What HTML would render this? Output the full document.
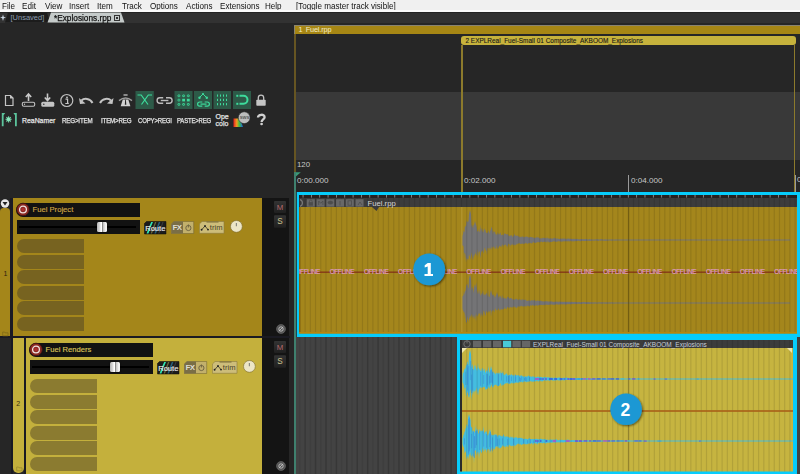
<!DOCTYPE html>
<html><head><meta charset="utf-8"><style>
*{margin:0;padding:0;box-sizing:border-box}
html,body{width:800px;height:474px;overflow:hidden;background:#262626;font-family:"Liberation Sans",sans-serif}
.a{position:absolute}
#menu{left:0;top:0;width:800px;height:12px;background:#f0f0f0}
#menu span{position:absolute;top:0.5px;font-size:8.6px;color:#111;line-height:10px;transform-origin:0 0;transform:scaleX(0.94)}
.rg{font-size:7.5px;line-height:8px;white-space:nowrap}
.tb{font-size:6.9px;color:#e4e4e4;font-weight:normal;-webkit-text-stroke:0.25px #e4e4e4;white-space:nowrap;line-height:7px}
.slot{position:absolute;height:14px;border-radius:7px 0 0 7px}
.rt{font-size:8.1px;color:#c8c8c8;white-space:nowrap;line-height:8px}
</style></head><body>
<div class="a" id="menu"><span style="left:2px">File</span><span style="left:22px">Edit</span><span style="left:45px">View</span><span style="left:69px">Insert</span><span style="left:97px">Item</span><span style="left:122px">Track</span><span style="left:150px">Options</span><span style="left:186px">Actions</span><span style="left:220px">Extensions</span><span style="left:265px">Help</span><span style="left:296px">[Toggle master track visible]</span></div>
<div class="a" style="left:0;top:10.3px;width:800px;height:1.5px;background:#fbfbfb"></div>
<div class="a" style="left:0;top:12px;width:800px;height:11px;background:#323232;border-top:1px solid #242424"></div>
<svg class="a" style="left:0;top:12px" width="140" height="11">
 <path d="M3 2.5 L3.8 5 L6 5.6 L3.8 6.3 L3 9 L2.2 6.3 L0 5.6 L2.2 5Z" fill="#c8d4e0"/>
 <polygon points="5,10.6 8,0.6 47,0.6 50,10.6" fill="#1c1c1c"/>
 <polygon points="47.5,10.6 51,0.6 121,0.6 124.5,10.6" fill="#c5cbca"/>
 <rect x="114.5" y="3.5" width="5" height="5" fill="none" stroke="#333" stroke-width="1"/>
 <rect x="116" y="5" width="2" height="2" fill="#333"/>
</svg>
<div class="a" style="left:10.5px;top:13.4px;font-size:7.5px;color:#8c9cb0;line-height:10px;letter-spacing:0px">[Unsaved]</div>
<div class="a" style="left:54px;top:12.5px;font-size:8.8px;color:#111;line-height:10px;-webkit-text-stroke:0.25px #111;transform-origin:0 0;transform:scaleX(0.94)">*Explosions.rpp</div>
<div class="a" style="left:296px;top:91.5px;width:504px;height:68.5px;background:#393939"></div>
<div class="a" style="left:294px;top:25px;width:506px;height:9px;background:#a68614;border-top:1px solid #8a8470;border-left:1px solid #8a8470"></div>
<div class="a rg" style="left:298.5px;top:26px;color:#f4ecc8;font-size:7.3px;letter-spacing:-0.15px">1<span style="margin-left:3.3px">Fuel.rpp</span></div>
<div class="a" style="left:294px;top:34px;width:2px;height:138px;background:#665522"></div>
<div class="a" style="left:461px;top:36px;width:335px;height:9px;background:#c6b23c;border-radius:3px"></div>
<div class="a rg" style="left:465.5px;top:37px;color:#151515;font-size:6.5px;-webkit-text-stroke:0.1px #151515;font-size:6.45px">2&nbsp;EXPLReal_Fuel-Small 01 Composite_AKBOOM_Explosions</div>
<div class="a" style="left:461px;top:45px;width:1.5px;height:147px;background:#8c7a2c"></div>
<div class="a" style="left:794px;top:45px;width:1px;height:147px;background:#8c7a2c"></div>
<div class="a rt" style="left:297px;top:161px;font-size:7.8px">120</div>
<svg class="a" style="left:294px;top:170px" width="12" height="10"><polygon points="0.7,2.2 6.8,2.2 0.7,7.6" fill="#3a9a78"/></svg>
<div class="a" style="left:294px;top:172px;width:2px;height:302px;background:#3f806e"></div>
<div class="a rt" style="left:297px;top:176.5px">0:00.000</div>
<div class="a rt" style="left:464px;top:176.5px">0:02.000</div>
<div class="a rt" style="left:631px;top:176.5px">0:04.000</div>
<div class="a" style="left:628px;top:175px;width:1px;height:17px;background:#9a9a9a"></div>
<div class="a" style="left:795px;top:175px;width:1px;height:17px;background:#9a9a9a"></div>
<div class="a rt" style="left:797px;top:176px">0</div>
<svg class="a" style="left:0;top:88px" width="290" height="42" viewBox="0 0 290 42">
 <path d="M5.5 7.5 H10.5 L13 10 V17.5 H5.5 Z" fill="none" stroke="#c4c4c4" stroke-width="1.2"/>
 <path d="M10 7 V10.5 H13.5 Z" fill="#c4c4c4"/>
 <path d="M28.5 13 V6.5 M25.8 9 L28.5 6 L31.2 9" stroke="#c8c8c8" stroke-width="1.6" fill="none"/>
 <rect x="22.3" y="14.3" width="12.4" height="4" rx="1.5" fill="none" stroke="#c4c4c4" stroke-width="1.1"/>
 <circle cx="24.5" cy="16.3" r="0.7" fill="#c8c8c8"/>
 <path d="M47.5 5.5 V12 M44.8 9.5 L47.5 12.5 L50.2 9.5" stroke="#c8c8c8" stroke-width="1.6" fill="none"/>
 <rect x="41.3" y="13.8" width="13" height="5" rx="1.5" fill="#c4c4c4"/>
 <circle cx="43.8" cy="16.3" r="0.8" fill="#333"/>
 <circle cx="66.8" cy="12.5" r="6" fill="none" stroke="#c0c0c0" stroke-width="1.2"/>
 <circle cx="67" cy="9.3" r="0.9" fill="#c8c8c8"/>
 <path d="M65.5 11.2 H67.6 V15.3 H68.7 M65.3 15.5 H68.8" stroke="#c8c8c8" stroke-width="1.2" fill="none"/>
 <path d="M92.5 15 C90 10 84 10 81.5 12.5" stroke="#c4c4c4" stroke-width="2" fill="none"/>
 <path d="M79 10 L80 16 L85.5 15.5 Z" fill="#c4c4c4"/>
 <path d="M100 15 C102.5 10 108.5 10 111 12.5" stroke="#c4c4c4" stroke-width="2" fill="none"/>
 <path d="M113.5 10 L112.5 16 L107 15.5 Z" fill="#c4c4c4"/>
 <path d="M123.5 6 H127.6 V8 H123.5Z" fill="#8a8a8a"/>
 <path d="M119 12.6 Q125.5 7.4 132 12.6" stroke="#9c9c9c" stroke-width="1.4" fill="none"/>
 <path d="M122.8 11.6 H128.3 L130.4 18.2 H120.7Z" fill="#d2d2d2"/>
 <path d="M125.2 11.6 H125.9 L126.3 16.8 H124.8Z" fill="#262626"/>
 <rect x="135.5" y="3" width="18.3" height="18" fill="#2d5a48"/>
 <path d="M137.5 7 H141.2 L148 16.5 M152 7 H148.3 L141.5 16.5" stroke="#3ddc9c" stroke-width="1.2" fill="none"/>
 <path d="M163.2 9.8 H159.8 A2.7 2.7 0 0 0 159.8 15.2 H163.2 M166 9.8 H169.4 A2.7 2.7 0 0 1 169.4 15.2 H166" stroke="#bcbcbc" stroke-width="1.4" fill="none"/>
 <rect x="160.8" y="11.8" width="7.6" height="1.4" fill="#bcbcbc"/>
 <rect x="174.5" y="3" width="18" height="18" fill="#2d5a48"/>
 <g fill="none" stroke="#3ddc9c" stroke-width="0.9"><rect x="177.95" y="6.95" width="1.9" height="1.7" rx=".4"/><rect x="182.64999999999998" y="6.95" width="1.9" height="1.7" rx=".4"/><rect x="187.35" y="6.95" width="1.9" height="1.7" rx=".4"/><rect x="177.95" y="11.25" width="1.9" height="1.7" rx=".4"/><rect x="177.95" y="15.549999999999999" width="1.9" height="1.7" rx=".4"/><rect x="182.64999999999998" y="15.549999999999999" width="1.9" height="1.7" rx=".4"/><rect x="187.35" y="15.549999999999999" width="1.9" height="1.7" rx=".4"/></g><g fill="#3ddc9c"><rect x="182.2" y="10.8" width="2.8" height="2.6"/><rect x="186.9" y="10.8" width="2.8" height="2.6"/></g>
 <rect x="194" y="3" width="18" height="18" fill="#2d5a48"/>
 <path d="M199.5 9.5 L203 6 L206.5 9.5" stroke="#3ddc9c" stroke-width="1" fill="none"/>
 <circle cx="199.5" cy="9.8" r="1.2" fill="#3ddc9c"/><circle cx="203" cy="6" r="1.1" fill="#3ddc9c"/><circle cx="206.8" cy="9.8" r="1.2" fill="#3ddc9c"/>
 <path d="M202.3 14 H199.7 A2.1 2.1 0 0 0 199.7 18.2 H202.3 M204.7 14 H207.3 A2.1 2.1 0 0 1 207.3 18.2 H204.7" stroke="#3ddc9c" stroke-width="1.2" fill="none"/>
 <rect x="200.5" y="15.5" width="6" height="1.2" fill="#3ddc9c"/>
 <rect x="213.5" y="3" width="17.5" height="18" fill="#2d5a48"/>
 <g fill="#3ddc9c">
  <rect x="217" y="6.5" width="1" height="2.2"/><rect x="220" y="6.5" width="1" height="2.2"/><rect x="223" y="6.5" width="1" height="2.2"/><rect x="226" y="6.5" width="1" height="2.2"/>
  <rect x="217" y="10.8" width="1" height="2.2"/><rect x="220" y="10.8" width="1" height="2.2"/><rect x="223" y="10.8" width="1" height="2.2"/><rect x="226" y="10.8" width="1" height="2.2"/>
  <rect x="217" y="15.1" width="1" height="2.2"/><rect x="220" y="15.1" width="1" height="2.2"/><rect x="223" y="15.1" width="1" height="2.2"/><rect x="226" y="15.1" width="1" height="2.2"/>
 </g>
 <rect x="233" y="3" width="18" height="18" fill="#2d5a48"/>
 <path d="M239.5 7.8 H243.5 A4 4 0 0 1 243.5 15.8 H239.5" stroke="#3ddc9c" stroke-width="2" fill="none"/>
 <rect x="236.3" y="6.8" width="2" height="2" fill="#3ddc9c"/><rect x="236.3" y="14.8" width="2" height="2" fill="#3ddc9c"/>
 <path d="M258.3 12 V9.8 A2.7 2.7 0 0 1 263.7 9.8 V12" stroke="#c4c4c4" stroke-width="1.3" fill="none"/>
 <rect x="256.3" y="11.8" width="9.4" height="6" rx="0.8" fill="#c4c4c4"/>
 <path d="M1.8 25 H5.2 L3.6 27.2 V38.2 H1.8Z M16.8 25 H13.4 L15 27.2 V38.2 H16.8Z" fill="#5cc49c"/>
 <g stroke="#72d8ac" stroke-width="1.1"><path d="M8.6 28.2 V34.4 M5.5 31.3 H11.7 M6.4 29.1 L10.8 33.5 M10.8 29.1 L6.4 33.5"/></g>
 <circle cx="8.6" cy="31.3" r="1.8" fill="#8ae6bc"/>
 <defs><linearGradient id="rb" x1="0" x2="1" y1="0" y2="0"><stop offset="0" stop-color="#e82020"/><stop offset=".35" stop-color="#f0a020"/><stop offset=".6" stop-color="#40c040"/><stop offset="1" stop-color="#2060e0"/></linearGradient></defs>
 <path d="M233.5 30.5 H240 L243 39 H233.5Z" fill="url(#rb)"/>
 <circle cx="244.2" cy="29.7" r="5.9" fill="#bdbdbd" stroke="#2a2a2a" stroke-width=".6"/>
 <text x="244.5" y="31.2" font-size="4.2" text-anchor="middle" fill="#555" font-family="Liberation Sans" font-weight="bold">SWS</text>
 <path d="M258 29.6 C258 26.2 264.6 25.6 264.6 29.2 C264.6 31.4 261.6 31.6 261.6 34" stroke="#d0d0d0" stroke-width="2.3" fill="none"/><circle cx="261.6" cy="36" r="1.35" fill="#d0d0d0"/>
</svg>

<div class="a tb" style="left:22px;top:116.5px">ReaNamer</div>
<div class="a tb" style="left:62px;top:116.5px;letter-spacing:-0.2px;transform-origin:0 0;transform:scaleX(0.9)">REG&gt;ITEM</div>
<div class="a tb" style="left:101px;top:116.5px;letter-spacing:-0.2px;transform-origin:0 0;transform:scaleX(0.9)">ITEM&gt;REG</div>
<div class="a tb" style="left:138px;top:116.5px;letter-spacing:-0.2px;transform-origin:0 0;transform:scaleX(0.875)">COPY&gt;REGI</div>
<div class="a tb" style="left:177px;top:116.5px;letter-spacing:-0.2px;transform-origin:0 0;transform:scaleX(0.865)">PASTE&gt;REG</div>
<div class="a tb" style="left:215.5px;top:113px;font-weight:normal;font-size:7px;line-height:7px">Ope<br>colo</div>
<div class="a" style="left:0;top:208.2px;width:10px;height:128.5px;background:#a4861a;border-radius:3.5px 3.5px 0 0"></div>
<div class="a" style="left:10.2px;top:198px;width:2.4px;height:140px;background:#1a1a24"></div>
<div class="a" style="left:13px;top:198px;width:250px;height:138px;background:#a4861a"></div>
<div class="a" style="left:262px;top:198px;width:27px;height:138px;background:#141414"></div>
<svg class="a" style="left:0;top:199px" width="10" height="10"><circle cx="5" cy="4.5" r="4.2" fill="#e8e8e8"/><polygon points="2.5,3 7.5,3 5,6.5" fill="#222"/></svg>
<div class="a" style="left:3.5px;top:270px;font-size:7px;color:#2a2010">1</div>
<div class="a" style="left:11px;top:338px;width:2px;height:136px;background:#1a1a22"></div>
<div class="a" style="left:13px;top:338px;width:10.5px;height:135px;background:#c4b03c;border-radius:0 0 5px 5px"></div>
<div class="a" style="left:23.5px;top:338px;width:2.5px;height:136px;background:#1a1a22"></div>
<div class="a" style="left:26px;top:338px;width:237px;height:136px;background:#c4b03c"></div>
<div class="a" style="left:262px;top:338px;width:27px;height:136px;background:#141414"></div>
<div class="a" style="left:0;top:336px;width:290px;height:2px;background:#1a1a22"></div>
<div class="a" style="left:16.3px;top:399.5px;font-size:7px;color:#3a3010">2</div>
<div class="a" style="left:16px;top:202.5px;width:123.5px;height:14px;background:#121212;border-radius:7px 0 0 7px"></div>
<svg class="a" style="left:15.5px;top:201.5px" width="15" height="15"><circle cx="7" cy="7.5" r="6.3" fill="#8a2a22" stroke="#3a1010" stroke-width=".8"/><circle cx="7" cy="7.5" r="3.4" fill="none" stroke="#f0e0e0" stroke-width="1.3"/><circle cx="7" cy="7.5" r="1.7" fill="#b03030"/></svg>
<div class="a" style="left:32.5px;top:204.5px;font-size:7.65px;-webkit-text-stroke:0.15px #cfa644;line-height:10px;color:#cfa644;white-space:nowrap">Fuel Project</div>
<div class="a" style="left:17px;top:220px;width:122.5px;height:13.5px;background:#121212"></div>
<div class="a" style="left:19px;top:226.2px;width:117px;height:1.5px;background:#000"></div>
<div class="a" style="left:97px;top:221.5px;width:9.5px;height:10px;background:linear-gradient(90deg,#b4b4b4 0,#d8d8d8 25%,#fff 42%,#fff 46%,#333 49%,#333 53%,#b8b8b8 56%,#dcdcdc 75%,#fff 92%,#ddd);border-radius:1.5px;box-shadow:0 0 1.5px #000"></div>
<svg class="a" style="left:144px;top:220.5px" width="24" height="14"><path d="M2.5 0.5 H22 V13 H0.5 V2.5Z" fill="#1c1c1c" stroke="#0a0a0a" stroke-width=".5"/><path d="M7.2 1 L9 1 L6.8 6 L5 6Z M4.6 7 L6.4 7 L4.4 12.5 L2.6 12.5Z" fill="#30e8b0"/><path d="M11 1 L12.4 1 L8 12.5 L6.6 12.5Z" fill="#6a6a3a"/><path d="M14.8 1 L16.4 1 L12 12.5 L10.4 12.5Z" fill="#28607a"/><path d="M18.4 1 L19.6 1 L15.4 12.5 L14.2 12.5Z" fill="#3a3a3a"/><text x="11.3" y="9.6" font-size="7.6" text-anchor="middle" fill="#ececec" font-family="Liberation Sans" stroke="#ececec" stroke-width=".15">Route</text></svg>
<svg class="a" style="left:171px;top:221px" width="24" height="13"><path d="M3 0.5 H22.7 V12.5 H0.3 V3Z" fill="#c2b06c" stroke="#6a5e30" stroke-width=".5"/><path d="M3 0.5 H12 V12.5 H0.3 V3Z" fill="#7a6e46"/><text x="6.3" y="9.4" font-size="7.2" text-anchor="middle" fill="#f0f0e8" font-family="Liberation Sans" stroke="#f0f0e8" stroke-width=".2">FX</text><circle cx="17.4" cy="7" r="2.6" fill="none" stroke="#6a6040" stroke-width=".9"/><path d="M17.4 3.5 V6.5" stroke="#6a6040" stroke-width=".9"/></svg>
<svg class="a" style="left:199px;top:221px" width="26" height="13"><path d="M3 0.5 H25 V12.3 H0.4 V3Z" fill="#cdbd7a" stroke="#8a7a40" stroke-width=".6"/><rect x="7.5" y="0.5" width="12" height="1" fill="#7a6c38"/><path d="M2.6 8.8 L6 5 L9 8.6" stroke="#2a2a1a" stroke-width=".75" fill="none"/><circle cx="2.6" cy="8.8" r=".95" fill="#222"/><circle cx="6" cy="5" r=".95" fill="#222"/><circle cx="9" cy="8.6" r=".95" fill="#222"/><text x="17.2" y="9.3" font-size="7.6" text-anchor="middle" fill="#4a4428" font-family="Liberation Sans">trim</text></svg>
<svg class="a" style="left:229.5px;top:220px" width="14" height="14"><circle cx="6.4" cy="6.4" r="5.9" fill="#ece6c6" stroke="#7a6a30" stroke-width=".6"/><path d="M6.4 3 V6.2" stroke="#8a8a80" stroke-width="1.2"/></svg>
<div class="slot" style="left:17.3px;top:239.00px;width:66.5px;height:14px;background:#776320"></div>
<div class="slot" style="left:17.3px;top:254.50px;width:66.5px;height:14px;background:#776320"></div>
<div class="slot" style="left:17.3px;top:270.00px;width:66.5px;height:14px;background:#776320"></div>
<div class="slot" style="left:17.3px;top:285.50px;width:66.5px;height:14px;background:#776320"></div>
<div class="slot" style="left:17.3px;top:301.00px;width:66.5px;height:14px;background:#776320"></div>
<div class="slot" style="left:17.3px;top:316.50px;width:66.5px;height:14px;background:#776320"></div>
<div class="a" style="left:29px;top:342.5px;width:123.5px;height:14px;background:#121212;border-radius:7px 0 0 7px"></div>
<svg class="a" style="left:28.5px;top:341.5px" width="15" height="15"><circle cx="7" cy="7.5" r="6.3" fill="#8a2a22" stroke="#3a1010" stroke-width=".8"/><circle cx="7" cy="7.5" r="3.4" fill="none" stroke="#f0e0e0" stroke-width="1.3"/><circle cx="7" cy="7.5" r="1.7" fill="#b03030"/></svg>
<div class="a" style="left:45.5px;top:344.5px;font-size:7.65px;-webkit-text-stroke:0.15px #dcc458;line-height:10px;color:#dcc458;white-space:nowrap">Fuel Renders</div>
<div class="a" style="left:30px;top:360px;width:122.5px;height:13.5px;background:#121212"></div>
<div class="a" style="left:32px;top:366.2px;width:117px;height:1.5px;background:#000"></div>
<div class="a" style="left:110px;top:361.5px;width:9.5px;height:10px;background:linear-gradient(90deg,#b4b4b4 0,#d8d8d8 25%,#fff 42%,#fff 46%,#333 49%,#333 53%,#b8b8b8 56%,#dcdcdc 75%,#fff 92%,#ddd);border-radius:1.5px;box-shadow:0 0 1.5px #000"></div>
<svg class="a" style="left:157px;top:360.5px" width="24" height="14"><path d="M2.5 0.5 H22 V13 H0.5 V2.5Z" fill="#1c1c1c" stroke="#0a0a0a" stroke-width=".5"/><path d="M7.2 1 L9 1 L6.8 6 L5 6Z M4.6 7 L6.4 7 L4.4 12.5 L2.6 12.5Z" fill="#30e8b0"/><path d="M11 1 L12.4 1 L8 12.5 L6.6 12.5Z" fill="#6a6a3a"/><path d="M14.8 1 L16.4 1 L12 12.5 L10.4 12.5Z" fill="#28607a"/><path d="M18.4 1 L19.6 1 L15.4 12.5 L14.2 12.5Z" fill="#3a3a3a"/><text x="11.3" y="9.6" font-size="7.6" text-anchor="middle" fill="#ececec" font-family="Liberation Sans" stroke="#ececec" stroke-width=".15">Route</text></svg>
<svg class="a" style="left:184px;top:361px" width="24" height="13"><path d="M3 0.5 H22.7 V12.5 H0.3 V3Z" fill="#c2b06c" stroke="#6a5e30" stroke-width=".5"/><path d="M3 0.5 H12 V12.5 H0.3 V3Z" fill="#7a6e46"/><text x="6.3" y="9.4" font-size="7.2" text-anchor="middle" fill="#f0f0e8" font-family="Liberation Sans" stroke="#f0f0e8" stroke-width=".2">FX</text><circle cx="17.4" cy="7" r="2.6" fill="none" stroke="#6a6040" stroke-width=".9"/><path d="M17.4 3.5 V6.5" stroke="#6a6040" stroke-width=".9"/></svg>
<svg class="a" style="left:212px;top:361px" width="26" height="13"><path d="M3 0.5 H25 V12.3 H0.4 V3Z" fill="#cdbd7a" stroke="#8a7a40" stroke-width=".6"/><rect x="7.5" y="0.5" width="12" height="1" fill="#7a6c38"/><path d="M2.6 8.8 L6 5 L9 8.6" stroke="#2a2a1a" stroke-width=".75" fill="none"/><circle cx="2.6" cy="8.8" r=".95" fill="#222"/><circle cx="6" cy="5" r=".95" fill="#222"/><circle cx="9" cy="8.6" r=".95" fill="#222"/><text x="17.2" y="9.3" font-size="7.6" text-anchor="middle" fill="#4a4428" font-family="Liberation Sans">trim</text></svg>
<svg class="a" style="left:242.5px;top:360px" width="14" height="14"><circle cx="6.4" cy="6.4" r="5.9" fill="#ece6c6" stroke="#7a6a30" stroke-width=".6"/><path d="M6.4 3 V6.2" stroke="#8a8a80" stroke-width="1.2"/></svg>
<div class="slot" style="left:30.3px;top:379.00px;width:66.5px;height:14px;background:#8b7b30"></div>
<div class="slot" style="left:30.3px;top:394.50px;width:66.5px;height:14px;background:#8b7b30"></div>
<div class="slot" style="left:30.3px;top:410.00px;width:66.5px;height:14px;background:#8b7b30"></div>
<div class="slot" style="left:30.3px;top:425.50px;width:66.5px;height:14px;background:#8b7b30"></div>
<div class="slot" style="left:30.3px;top:441.00px;width:66.5px;height:14px;background:#8b7b30"></div>
<div class="slot" style="left:30.3px;top:456.50px;width:66.5px;height:14px;background:#8b7b30"></div>
<svg class="a" style="left:274px;top:201px" width="13" height="28"><defs><linearGradient id="mb0" x1="0" y1="0" x2="0" y2="1"><stop offset="0" stop-color="#333"/><stop offset="1" stop-color="#202020"/></linearGradient></defs><rect x="0" y="0" width="12" height="12" rx="1" fill="url(#mb0)"/><text x="6" y="8.6" font-size="7.8" text-anchor="middle" fill="#b86a6e" font-family="Liberation Sans">M</text><rect x="0" y="14.3" width="12" height="12.5" rx="1" fill="url(#mb0)"/><text x="6" y="23.3" font-size="8.2" text-anchor="middle" fill="#cfc690" font-family="Liberation Sans">S</text></svg>
<svg class="a" style="left:274.5px;top:322.5px" width="12" height="12"><circle cx="6" cy="6" r="4.5" fill="#555" stroke="#777" stroke-width=".5"/><circle cx="6" cy="6" r="2.2" fill="none" stroke="#ccc" stroke-width=".8"/><path d="M3.8 8.2 L8.2 3.8" stroke="#ccc" stroke-width=".8"/></svg>
<svg class="a" style="left:274px;top:341px" width="13" height="28"><defs><linearGradient id="mb140" x1="0" y1="0" x2="0" y2="1"><stop offset="0" stop-color="#333"/><stop offset="1" stop-color="#202020"/></linearGradient></defs><rect x="0" y="0" width="12" height="12" rx="1" fill="url(#mb140)"/><text x="6" y="8.6" font-size="7.8" text-anchor="middle" fill="#b86a6e" font-family="Liberation Sans">M</text><rect x="0" y="14.3" width="12" height="12.5" rx="1" fill="url(#mb140)"/><text x="6" y="23.3" font-size="8.2" text-anchor="middle" fill="#cfc690" font-family="Liberation Sans">S</text></svg>
<svg class="a" style="left:274.5px;top:460px" width="12" height="12"><circle cx="6" cy="6" r="4.5" fill="#555" stroke="#777" stroke-width=".5"/><circle cx="6" cy="6" r="2.2" fill="none" stroke="#ccc" stroke-width=".8"/><path d="M3.8 8.2 L8.2 3.8" stroke="#ccc" stroke-width=".8"/></svg>
<svg class="a" style="left:2px;top:331px" width="7" height="6"><path d="M0.7 1 H2.5 L3 1.8 H6 V4.8 H0.7Z" fill="none" stroke="#806a18" stroke-width=".8"/></svg>
<svg class="a" style="left:15.5px;top:466px" width="7" height="6"><path d="M0.7 1 H2.5 L3 1.8 H6 V4.8 H0.7Z" fill="none" stroke="#9a8a30" stroke-width=".8"/></svg>
<svg class="a" style="left:0;top:0" width="800" height="474"><rect x="296" y="337" width="504" height="137" fill="#434343"/><rect x="299.16" y="337" width="1.50" height="137" fill="rgba(0,0,0,0.07)"/><rect x="304.38" y="337" width="1.50" height="137" fill="rgba(0,0,0,0.17)"/><rect x="309.59" y="337" width="1.50" height="137" fill="rgba(0,0,0,0.07)"/><rect x="314.80" y="337" width="1.50" height="137" fill="rgba(0,0,0,0.17)"/><rect x="320.01" y="337" width="1.50" height="137" fill="rgba(0,0,0,0.07)"/><rect x="325.22" y="337" width="1.50" height="137" fill="rgba(0,0,0,0.17)"/><rect x="330.44" y="337" width="1.50" height="137" fill="rgba(0,0,0,0.07)"/><rect x="335.65" y="337" width="1.50" height="137" fill="rgba(0,0,0,0.17)"/><rect x="340.86" y="337" width="1.50" height="137" fill="rgba(0,0,0,0.07)"/><rect x="346.07" y="337" width="1.50" height="137" fill="rgba(0,0,0,0.17)"/><rect x="351.29" y="337" width="1.50" height="137" fill="rgba(0,0,0,0.07)"/><rect x="356.50" y="337" width="1.50" height="137" fill="rgba(0,0,0,0.17)"/><rect x="361.71" y="337" width="1.50" height="137" fill="rgba(0,0,0,0.07)"/><rect x="366.93" y="337" width="1.50" height="137" fill="rgba(0,0,0,0.17)"/><rect x="372.14" y="337" width="1.50" height="137" fill="rgba(0,0,0,0.07)"/><rect x="377.35" y="337" width="1.50" height="137" fill="rgba(0,0,0,0.17)"/><rect x="382.56" y="337" width="1.50" height="137" fill="rgba(0,0,0,0.07)"/><rect x="387.77" y="337" width="1.50" height="137" fill="rgba(0,0,0,0.17)"/><rect x="392.99" y="337" width="1.50" height="137" fill="rgba(0,0,0,0.07)"/><rect x="398.20" y="337" width="1.50" height="137" fill="rgba(0,0,0,0.17)"/><rect x="403.41" y="337" width="1.50" height="137" fill="rgba(0,0,0,0.07)"/><rect x="408.62" y="337" width="1.50" height="137" fill="rgba(0,0,0,0.17)"/><rect x="413.84" y="337" width="1.50" height="137" fill="rgba(0,0,0,0.07)"/><rect x="419.05" y="337" width="1.50" height="137" fill="rgba(0,0,0,0.17)"/><rect x="424.26" y="337" width="1.50" height="137" fill="rgba(0,0,0,0.07)"/><rect x="429.48" y="337" width="1.50" height="137" fill="rgba(0,0,0,0.17)"/><rect x="434.69" y="337" width="1.50" height="137" fill="rgba(0,0,0,0.07)"/><rect x="439.90" y="337" width="1.50" height="137" fill="rgba(0,0,0,0.17)"/><rect x="445.11" y="337" width="1.50" height="137" fill="rgba(0,0,0,0.07)"/><rect x="450.32" y="337" width="1.50" height="137" fill="rgba(0,0,0,0.17)"/><rect x="455.54" y="337" width="1.50" height="137" fill="rgba(0,0,0,0.07)"/><rect x="460.75" y="337" width="1.50" height="137" fill="rgba(0,0,0,0.17)"/><rect x="465.96" y="337" width="1.50" height="137" fill="rgba(0,0,0,0.07)"/><rect x="471.18" y="337" width="1.50" height="137" fill="rgba(0,0,0,0.17)"/><rect x="476.39" y="337" width="1.50" height="137" fill="rgba(0,0,0,0.07)"/><rect x="481.60" y="337" width="1.50" height="137" fill="rgba(0,0,0,0.17)"/><rect x="486.81" y="337" width="1.50" height="137" fill="rgba(0,0,0,0.07)"/><rect x="492.02" y="337" width="1.50" height="137" fill="rgba(0,0,0,0.17)"/><rect x="497.24" y="337" width="1.50" height="137" fill="rgba(0,0,0,0.07)"/><rect x="502.45" y="337" width="1.50" height="137" fill="rgba(0,0,0,0.17)"/><rect x="507.66" y="337" width="1.50" height="137" fill="rgba(0,0,0,0.07)"/><rect x="512.88" y="337" width="1.50" height="137" fill="rgba(0,0,0,0.17)"/><rect x="518.09" y="337" width="1.50" height="137" fill="rgba(0,0,0,0.07)"/><rect x="523.30" y="337" width="1.50" height="137" fill="rgba(0,0,0,0.17)"/><rect x="528.51" y="337" width="1.50" height="137" fill="rgba(0,0,0,0.07)"/><rect x="533.73" y="337" width="1.50" height="137" fill="rgba(0,0,0,0.17)"/><rect x="538.94" y="337" width="1.50" height="137" fill="rgba(0,0,0,0.07)"/><rect x="544.15" y="337" width="1.50" height="137" fill="rgba(0,0,0,0.17)"/><rect x="549.36" y="337" width="1.50" height="137" fill="rgba(0,0,0,0.07)"/><rect x="554.58" y="337" width="1.50" height="137" fill="rgba(0,0,0,0.17)"/><rect x="559.79" y="337" width="1.50" height="137" fill="rgba(0,0,0,0.07)"/><rect x="565.00" y="337" width="1.50" height="137" fill="rgba(0,0,0,0.17)"/><rect x="570.21" y="337" width="1.50" height="137" fill="rgba(0,0,0,0.07)"/><rect x="575.42" y="337" width="1.50" height="137" fill="rgba(0,0,0,0.17)"/><rect x="580.64" y="337" width="1.50" height="137" fill="rgba(0,0,0,0.07)"/><rect x="585.85" y="337" width="1.50" height="137" fill="rgba(0,0,0,0.17)"/><rect x="591.06" y="337" width="1.50" height="137" fill="rgba(0,0,0,0.07)"/><rect x="596.28" y="337" width="1.50" height="137" fill="rgba(0,0,0,0.17)"/><rect x="601.49" y="337" width="1.50" height="137" fill="rgba(0,0,0,0.07)"/><rect x="606.70" y="337" width="1.50" height="137" fill="rgba(0,0,0,0.17)"/><rect x="611.91" y="337" width="1.50" height="137" fill="rgba(0,0,0,0.07)"/><rect x="617.12" y="337" width="1.50" height="137" fill="rgba(0,0,0,0.17)"/><rect x="622.34" y="337" width="1.50" height="137" fill="rgba(0,0,0,0.07)"/><rect x="627.55" y="337" width="1.50" height="137" fill="rgba(0,0,0,0.17)"/><rect x="632.76" y="337" width="1.50" height="137" fill="rgba(0,0,0,0.07)"/><rect x="637.98" y="337" width="1.50" height="137" fill="rgba(0,0,0,0.17)"/><rect x="643.19" y="337" width="1.50" height="137" fill="rgba(0,0,0,0.07)"/><rect x="648.40" y="337" width="1.50" height="137" fill="rgba(0,0,0,0.17)"/><rect x="653.61" y="337" width="1.50" height="137" fill="rgba(0,0,0,0.07)"/><rect x="658.83" y="337" width="1.50" height="137" fill="rgba(0,0,0,0.17)"/><rect x="664.04" y="337" width="1.50" height="137" fill="rgba(0,0,0,0.07)"/><rect x="669.25" y="337" width="1.50" height="137" fill="rgba(0,0,0,0.17)"/><rect x="674.46" y="337" width="1.50" height="137" fill="rgba(0,0,0,0.07)"/><rect x="679.67" y="337" width="1.50" height="137" fill="rgba(0,0,0,0.17)"/><rect x="684.89" y="337" width="1.50" height="137" fill="rgba(0,0,0,0.07)"/><rect x="690.10" y="337" width="1.50" height="137" fill="rgba(0,0,0,0.17)"/><rect x="695.31" y="337" width="1.50" height="137" fill="rgba(0,0,0,0.07)"/><rect x="700.53" y="337" width="1.50" height="137" fill="rgba(0,0,0,0.17)"/><rect x="705.74" y="337" width="1.50" height="137" fill="rgba(0,0,0,0.07)"/><rect x="710.95" y="337" width="1.50" height="137" fill="rgba(0,0,0,0.17)"/><rect x="716.16" y="337" width="1.50" height="137" fill="rgba(0,0,0,0.07)"/><rect x="721.38" y="337" width="1.50" height="137" fill="rgba(0,0,0,0.17)"/><rect x="726.59" y="337" width="1.50" height="137" fill="rgba(0,0,0,0.07)"/><rect x="731.80" y="337" width="1.50" height="137" fill="rgba(0,0,0,0.17)"/><rect x="737.01" y="337" width="1.50" height="137" fill="rgba(0,0,0,0.07)"/><rect x="742.23" y="337" width="1.50" height="137" fill="rgba(0,0,0,0.17)"/><rect x="747.44" y="337" width="1.50" height="137" fill="rgba(0,0,0,0.07)"/><rect x="752.65" y="337" width="1.50" height="137" fill="rgba(0,0,0,0.17)"/><rect x="757.86" y="337" width="1.50" height="137" fill="rgba(0,0,0,0.07)"/><rect x="763.08" y="337" width="1.50" height="137" fill="rgba(0,0,0,0.17)"/><rect x="768.29" y="337" width="1.50" height="137" fill="rgba(0,0,0,0.07)"/><rect x="773.50" y="337" width="1.50" height="137" fill="rgba(0,0,0,0.17)"/><rect x="778.71" y="337" width="1.50" height="137" fill="rgba(0,0,0,0.07)"/><rect x="783.92" y="337" width="1.50" height="137" fill="rgba(0,0,0,0.17)"/><rect x="789.14" y="337" width="1.50" height="137" fill="rgba(0,0,0,0.07)"/><rect x="794.35" y="337" width="1.50" height="137" fill="rgba(0,0,0,0.17)"/><rect x="799.56" y="337" width="0.44" height="137" fill="rgba(0,0,0,0.07)"/><rect x="296.8" y="192" width="503.2" height="145" fill="#06ccfc"/><rect x="299" y="195" width="498" height="12" fill="#3c3c3c"/><rect x="299" y="195" width="498" height="3" fill="#262020"/><rect x="299" y="207" width="498" height="126.5" fill="#a4861c"/><path d="M462.0 236.9 L462.5 234.7 L463.0 234.8 L463.5 230.5 L464.0 231.8 L464.5 231.9 L465.0 225.2 L465.5 226.4 L466.0 227.1 L466.5 221.5 L467.0 220.2 L467.5 222.6 L468.0 221.6 L468.5 221.4 L469.0 214.0 L469.5 212.0 L470.0 210.0 L470.5 212.0 L471.0 214.0 L471.5 227.0 L472.0 224.2 L472.5 226.5 L473.0 228.6 L473.5 224.8 L474.0 224.9 L474.5 223.0 L475.0 221.0 L475.5 223.0 L476.0 225.0 L476.5 225.6 L477.0 230.0 L477.5 231.7 L478.0 231.2 L478.5 231.0 L479.0 227.7 L479.5 232.2 L480.0 231.8 L480.5 224.4 L481.0 231.8 L481.5 228.8 L482.0 228.2 L482.5 230.7 L483.0 232.8 L483.5 231.5 L484.0 229.2 L484.5 228.6 L485.0 230.5 L485.5 229.9 L486.0 232.6 L486.5 233.2 L487.0 232.2 L487.5 233.0 L488.0 232.4 L488.5 229.7 L489.0 231.9 L489.5 233.9 L490.0 230.9 L490.5 230.5 L491.0 228.5 L491.5 226.5 L492.0 228.5 L492.5 230.5 L493.0 234.5 L493.5 231.1 L494.0 231.6 L494.5 232.5 L495.0 231.2 L495.5 234.3 L496.0 233.8 L496.5 234.4 L497.0 235.3 L497.5 233.3 L498.0 232.3 L498.5 234.9 L499.0 233.3 L499.5 234.7 L500.0 232.4 L500.5 232.7 L501.0 234.9 L501.5 234.9 L502.0 235.3 L502.5 234.3 L503.0 235.2 L503.5 235.7 L504.0 233.4 L504.5 233.8 L505.0 233.6 L505.5 233.8 L506.0 234.2 L506.5 234.6 L507.0 234.6 L507.5 234.0 L508.0 234.3 L508.5 236.0 L509.0 235.2 L509.5 236.5 L510.0 235.8 L510.5 235.5 L511.0 235.2 L511.5 235.8 L512.0 234.8 L512.5 236.9 L513.0 236.7 L513.5 235.5 L514.0 235.5 L514.5 233.5 L515.0 235.5 L515.5 235.8 L516.0 235.8 L516.5 235.6 L517.0 235.4 L517.5 236.0 L518.0 235.5 L518.5 237.2 L519.0 235.6 L519.5 237.3 L520.0 237.6 L520.5 236.4 L521.0 237.1 L521.5 237.2 L522.0 235.9 L522.5 236.3 L523.0 237.6 L523.5 236.8 L524.0 237.6 L524.5 237.0 L525.0 237.1 L525.5 236.6 L526.0 236.2 L526.5 237.0 L527.0 236.4 L527.5 236.8 L528.0 237.1 L528.5 237.5 L529.0 237.2 L529.5 237.4 L530.0 237.2 L530.5 236.8 L531.0 237.0 L531.5 237.2 L532.0 237.0 L532.5 237.5 L533.0 237.4 L533.5 237.4 L534.0 238.0 L534.5 238.3 L535.0 237.7 L535.5 237.5 L536.0 238.1 L536.5 237.3 L537.0 236.6 L537.5 237.7 L538.0 237.5 L538.5 237.3 L539.0 237.8 L539.5 238.4 L540.0 238.3 L540.5 238.5 L541.0 238.4 L541.5 238.4 L542.0 237.5 L542.5 238.5 L543.0 238.1 L543.5 237.8 L544.0 237.9 L544.5 237.7 L545.0 238.4 L545.5 238.3 L546.0 237.8 L546.5 238.7 L547.0 237.1 L547.5 238.0 L548.0 238.7 L548.5 238.2 L549.0 238.2 L549.5 238.8 L550.0 238.3 L550.5 238.5 L551.0 238.5 L551.5 238.3 L552.0 238.8 L552.5 238.9 L553.0 238.1 L553.5 238.6 L554.0 238.2 L554.5 237.6 L555.0 238.4 L555.5 238.3 L556.0 238.8 L556.5 238.4 L557.0 238.5 L557.5 238.4 L558.0 238.4 L558.5 238.7 L559.0 239.0 L559.5 238.9 L560.0 238.7 L560.5 238.4 L561.0 238.8 L561.5 238.5 L562.0 239.0 L562.5 238.6 L563.0 238.5 L563.5 238.5 L564.0 238.7 L564.5 238.4 L565.0 238.8 L565.5 238.8 L566.0 238.6 L566.5 239.2 L567.0 239.0 L567.5 238.6 L568.0 238.6 L568.5 238.6 L569.0 238.8 L569.5 238.7 L570.0 238.7 L570.5 238.8 L571.0 238.7 L571.5 238.9 L572.0 238.8 L572.5 239.1 L573.0 239.0 L573.5 238.7 L574.0 239.1 L574.5 238.8 L575.0 239.1 L575.5 239.1 L576.0 238.8 L576.5 239.2 L577.0 238.8 L577.5 239.0 L578.0 239.0 L578.5 239.3 L579.0 239.4 L579.5 239.2 L580.0 239.1 L580.5 239.2 L581.0 239.1 L581.5 239.3 L582.0 239.0 L582.5 239.2 L583.0 239.0 L583.5 239.2 L584.0 239.2 L584.5 239.2 L585.0 239.1 L585.5 239.0 L586.0 239.3 L586.5 239.1 L587.0 239.3 L587.5 239.2 L588.0 239.4 L588.5 239.4 L589.0 239.3 L589.5 238.9 L590.0 239.2 L590.5 239.4 L591.0 239.4 L591.5 239.2 L592.0 239.4 L592.5 239.5 L593.0 239.5 L593.5 239.4 L594.0 239.4 L594.5 239.3 L595.0 239.5 L595.5 239.5 L596.0 239.3 L596.5 239.3 L597.0 239.2 L597.5 239.2 L598.0 239.4 L598.5 239.2 L599.0 239.4 L599.5 239.4 L600.0 239.4 L600.5 239.3 L601.0 239.0 L601.5 239.3 L602.0 239.3 L602.5 239.5 L603.0 239.5 L603.5 239.5 L604.0 239.5 L604.5 239.5 L605.0 239.3 L605.5 239.3 L606.0 239.4 L606.5 239.5 L607.0 239.5 L607.5 239.4 L608.0 239.5 L608.5 239.4 L609.0 239.5 L609.5 239.5 L610.0 239.4 L610.5 239.5 L611.0 239.5 L611.5 239.2 L612.0 239.5 L612.5 239.5 L613.0 239.4 L613.5 239.4 L614.0 239.5 L614.5 239.5 L615.0 239.5 L615.5 239.4 L616.0 239.2 L616.5 239.5 L617.0 239.5 L617.5 239.4 L618.0 239.5 L618.5 239.5 L619.0 239.4 L619.5 239.5 L620.0 239.5 L620.5 239.5 L621.0 239.5 L621.5 239.5 L622.0 239.5 L622.5 239.5 L623.0 239.5 L623.5 239.5 L624.0 239.5 L624.5 239.5 L625.0 239.5 L625.5 239.5 L626.0 239.5 L626.5 239.5 L627.0 239.5 L627.5 239.5 L628.0 239.5 L628.5 239.5 L629.0 239.5 L629.5 239.5 L630.0 239.5 L630.5 239.5 L631.0 239.5 L631.5 239.5 L632.0 239.5 L632.5 239.5 L633.0 239.5 L633.5 239.5 L634.0 239.5 L634.5 239.5 L635.0 239.5 L635.5 239.5 L636.0 239.5 L636.5 239.5 L637.0 239.5 L637.5 239.5 L638.0 239.5 L638.5 239.5 L639.0 239.5 L639.5 239.5 L640.0 239.5 L640.5 239.5 L641.0 239.5 L641.5 239.5 L642.0 239.5 L642.5 239.5 L643.0 239.5 L643.5 239.5 L644.0 239.5 L644.5 239.5 L645.0 239.5 L645.5 239.5 L646.0 239.5 L646.5 239.5 L647.0 239.5 L647.5 239.5 L648.0 239.5 L648.5 239.5 L649.0 239.5 L649.5 239.5 L650.0 239.5 L650.5 239.5 L651.0 239.5 L651.5 239.5 L652.0 239.5 L652.5 239.5 L653.0 239.5 L653.5 239.5 L654.0 239.5 L654.5 239.5 L655.0 239.5 L655.5 239.5 L656.0 239.5 L656.5 239.5 L657.0 239.5 L657.5 239.5 L658.0 239.5 L658.5 239.5 L659.0 239.5 L659.5 239.5 L660.0 239.5 L660.5 239.5 L661.0 239.5 L661.5 239.5 L662.0 239.5 L662.5 239.5 L663.0 239.5 L663.5 239.5 L664.0 239.5 L664.5 239.5 L665.0 239.5 L665.5 239.5 L666.0 239.5 L666.5 239.5 L667.0 239.5 L667.5 239.5 L668.0 239.5 L668.5 239.5 L669.0 239.5 L669.5 239.5 L670.0 239.5 L670.5 239.5 L671.0 239.5 L671.5 239.5 L672.0 239.5 L672.5 239.5 L673.0 239.5 L673.5 239.5 L674.0 239.5 L674.5 239.5 L675.0 239.5 L675.5 239.5 L676.0 239.5 L676.5 239.5 L677.0 239.5 L677.5 239.5 L678.0 239.5 L678.5 239.5 L679.0 239.5 L679.5 239.5 L680.0 239.5 L680.5 239.5 L681.0 239.5 L681.5 239.5 L682.0 239.5 L682.5 239.5 L683.0 239.5 L683.5 239.5 L684.0 239.5 L684.5 239.5 L685.0 239.5 L685.5 239.5 L686.0 239.5 L686.5 239.5 L687.0 239.5 L687.5 239.5 L688.0 239.5 L688.5 239.5 L689.0 239.5 L689.5 239.5 L690.0 239.5 L690.5 239.5 L691.0 239.5 L691.5 239.5 L692.0 239.5 L692.5 239.5 L693.0 239.5 L693.5 239.5 L694.0 239.5 L694.5 239.5 L695.0 239.5 L695.5 239.5 L696.0 239.5 L696.5 239.5 L697.0 239.5 L697.5 239.5 L698.0 239.5 L698.5 239.5 L699.0 239.5 L699.5 239.5 L700.0 239.5 L700.5 239.5 L701.0 239.5 L701.5 239.5 L702.0 239.5 L702.5 239.5 L703.0 239.5 L703.5 239.5 L704.0 239.5 L704.5 239.5 L705.0 239.5 L705.5 239.5 L706.0 239.5 L706.5 239.5 L707.0 239.5 L707.5 239.5 L708.0 239.5 L708.5 239.5 L709.0 239.5 L709.5 239.5 L710.0 239.5 L710.5 239.5 L711.0 239.5 L711.5 239.5 L712.0 239.5 L712.5 239.5 L713.0 239.5 L713.5 239.5 L714.0 239.5 L714.5 239.5 L715.0 239.5 L715.5 239.5 L716.0 239.5 L716.5 239.5 L717.0 239.5 L717.5 239.5 L718.0 239.5 L718.5 239.5 L719.0 239.5 L719.5 239.5 L720.0 239.5 L720.5 239.5 L721.0 239.5 L721.5 239.5 L722.0 239.5 L722.5 239.5 L723.0 239.5 L723.5 239.5 L724.0 239.5 L724.5 239.5 L725.0 239.5 L725.5 239.5 L726.0 239.5 L726.5 239.5 L727.0 239.5 L727.5 239.5 L728.0 239.5 L728.5 239.5 L729.0 239.5 L729.5 239.5 L730.0 239.5 L730.5 239.5 L731.0 239.5 L731.5 239.5 L732.0 239.5 L732.5 239.5 L733.0 239.5 L733.5 239.5 L734.0 239.5 L734.5 239.5 L735.0 239.5 L735.5 239.5 L736.0 239.5 L736.5 239.5 L737.0 239.5 L737.5 239.5 L738.0 239.5 L738.5 239.5 L739.0 239.5 L739.5 239.5 L740.0 239.5 L740.5 239.5 L741.0 239.5 L741.5 239.5 L742.0 239.5 L742.5 239.5 L743.0 239.5 L743.5 239.5 L744.0 239.5 L744.5 239.5 L745.0 239.5 L745.5 239.5 L746.0 239.5 L746.5 239.5 L747.0 239.5 L747.5 239.5 L748.0 239.5 L748.5 239.5 L749.0 239.5 L749.5 239.5 L750.0 239.5 L750.5 239.5 L751.0 239.5 L751.5 239.5 L752.0 239.5 L752.5 239.5 L753.0 239.5 L753.5 239.5 L754.0 239.5 L754.5 239.5 L755.0 239.5 L755.5 239.5 L756.0 239.5 L756.5 239.5 L757.0 239.5 L757.5 239.5 L758.0 239.5 L758.5 239.5 L759.0 239.5 L759.5 239.5 L760.0 239.5 L760.5 239.5 L761.0 239.5 L761.5 239.5 L762.0 239.5 L762.5 239.5 L763.0 239.5 L763.5 239.5 L764.0 239.5 L764.5 239.5 L765.0 239.5 L765.5 239.5 L766.0 239.5 L766.5 239.5 L767.0 239.5 L767.5 239.5 L768.0 239.5 L768.5 239.5 L769.0 239.5 L769.5 239.5 L770.0 239.5 L770.5 239.5 L771.0 239.5 L771.5 239.5 L772.0 239.5 L772.5 239.5 L773.0 239.5 L773.5 239.5 L774.0 239.5 L774.5 239.5 L775.0 239.5 L775.5 239.5 L776.0 239.5 L776.5 239.5 L777.0 239.5 L777.5 239.5 L778.0 239.5 L778.5 239.5 L779.0 239.5 L779.5 239.5 L780.0 239.5 L780.5 239.5 L781.0 239.5 L781.5 239.5 L782.0 239.5 L782.5 239.5 L783.0 239.5 L783.5 239.5 L784.0 239.5 L784.5 239.5 L785.0 239.5 L785.5 239.5 L786.0 239.5 L786.5 239.5 L787.0 239.5 L787.5 239.5 L788.0 239.5 L788.5 239.5 L789.0 239.5 L789.5 239.5 L790.0 239.5 L790.0 240.5 L789.5 240.5 L789.0 240.5 L788.5 240.5 L788.0 240.5 L787.5 240.5 L787.0 240.5 L786.5 240.5 L786.0 240.5 L785.5 240.5 L785.0 240.5 L784.5 240.5 L784.0 240.5 L783.5 240.5 L783.0 240.5 L782.5 240.5 L782.0 240.5 L781.5 240.5 L781.0 240.5 L780.5 240.5 L780.0 240.5 L779.5 240.5 L779.0 240.5 L778.5 240.5 L778.0 240.5 L777.5 240.5 L777.0 240.5 L776.5 240.5 L776.0 240.5 L775.5 240.5 L775.0 240.5 L774.5 240.5 L774.0 240.5 L773.5 240.5 L773.0 240.5 L772.5 240.5 L772.0 240.5 L771.5 240.5 L771.0 240.5 L770.5 240.5 L770.0 240.5 L769.5 240.5 L769.0 240.5 L768.5 240.5 L768.0 240.5 L767.5 240.5 L767.0 240.5 L766.5 240.5 L766.0 240.5 L765.5 240.5 L765.0 240.5 L764.5 240.5 L764.0 240.5 L763.5 240.5 L763.0 240.5 L762.5 240.5 L762.0 240.5 L761.5 240.5 L761.0 240.5 L760.5 240.5 L760.0 240.5 L759.5 240.5 L759.0 240.5 L758.5 240.5 L758.0 240.5 L757.5 240.5 L757.0 240.5 L756.5 240.5 L756.0 240.5 L755.5 240.5 L755.0 240.5 L754.5 240.5 L754.0 240.5 L753.5 240.5 L753.0 240.5 L752.5 240.5 L752.0 240.5 L751.5 240.5 L751.0 240.5 L750.5 240.5 L750.0 240.5 L749.5 240.5 L749.0 240.5 L748.5 240.5 L748.0 240.5 L747.5 240.5 L747.0 240.5 L746.5 240.5 L746.0 240.5 L745.5 240.5 L745.0 240.5 L744.5 240.5 L744.0 240.5 L743.5 240.5 L743.0 240.5 L742.5 240.5 L742.0 240.5 L741.5 240.5 L741.0 240.5 L740.5 240.5 L740.0 240.5 L739.5 240.5 L739.0 240.5 L738.5 240.5 L738.0 240.5 L737.5 240.5 L737.0 240.5 L736.5 240.5 L736.0 240.5 L735.5 240.5 L735.0 240.5 L734.5 240.5 L734.0 240.5 L733.5 240.5 L733.0 240.5 L732.5 240.5 L732.0 240.5 L731.5 240.5 L731.0 240.5 L730.5 240.5 L730.0 240.5 L729.5 240.5 L729.0 240.5 L728.5 240.5 L728.0 240.5 L727.5 240.5 L727.0 240.5 L726.5 240.5 L726.0 240.5 L725.5 240.5 L725.0 240.5 L724.5 240.5 L724.0 240.5 L723.5 240.5 L723.0 240.5 L722.5 240.5 L722.0 240.5 L721.5 240.5 L721.0 240.5 L720.5 240.5 L720.0 240.5 L719.5 240.5 L719.0 240.5 L718.5 240.5 L718.0 240.5 L717.5 240.5 L717.0 240.5 L716.5 240.5 L716.0 240.5 L715.5 240.5 L715.0 240.5 L714.5 240.5 L714.0 240.5 L713.5 240.5 L713.0 240.5 L712.5 240.5 L712.0 240.5 L711.5 240.5 L711.0 240.5 L710.5 240.5 L710.0 240.5 L709.5 240.5 L709.0 240.5 L708.5 240.5 L708.0 240.5 L707.5 240.5 L707.0 240.5 L706.5 240.5 L706.0 240.5 L705.5 240.5 L705.0 240.5 L704.5 240.5 L704.0 240.5 L703.5 240.5 L703.0 240.5 L702.5 240.5 L702.0 240.5 L701.5 240.5 L701.0 240.5 L700.5 240.5 L700.0 240.5 L699.5 240.5 L699.0 240.5 L698.5 240.5 L698.0 240.5 L697.5 240.5 L697.0 240.5 L696.5 240.5 L696.0 240.5 L695.5 240.5 L695.0 240.5 L694.5 240.5 L694.0 240.5 L693.5 240.5 L693.0 240.5 L692.5 240.5 L692.0 240.5 L691.5 240.5 L691.0 240.5 L690.5 240.5 L690.0 240.5 L689.5 240.5 L689.0 240.5 L688.5 240.5 L688.0 240.5 L687.5 240.5 L687.0 240.5 L686.5 240.5 L686.0 240.5 L685.5 240.5 L685.0 240.5 L684.5 240.5 L684.0 240.5 L683.5 240.5 L683.0 240.5 L682.5 240.5 L682.0 240.5 L681.5 240.5 L681.0 240.5 L680.5 240.5 L680.0 240.5 L679.5 240.5 L679.0 240.5 L678.5 240.5 L678.0 240.5 L677.5 240.5 L677.0 240.5 L676.5 240.5 L676.0 240.5 L675.5 240.5 L675.0 240.5 L674.5 240.5 L674.0 240.5 L673.5 240.5 L673.0 240.5 L672.5 240.5 L672.0 240.5 L671.5 240.5 L671.0 240.5 L670.5 240.5 L670.0 240.5 L669.5 240.5 L669.0 240.5 L668.5 240.5 L668.0 240.5 L667.5 240.5 L667.0 240.5 L666.5 240.5 L666.0 240.5 L665.5 240.5 L665.0 240.5 L664.5 240.5 L664.0 240.5 L663.5 240.5 L663.0 240.5 L662.5 240.5 L662.0 240.5 L661.5 240.5 L661.0 240.5 L660.5 240.5 L660.0 240.5 L659.5 240.5 L659.0 240.5 L658.5 240.5 L658.0 240.5 L657.5 240.5 L657.0 240.5 L656.5 240.5 L656.0 240.5 L655.5 240.5 L655.0 240.5 L654.5 240.5 L654.0 240.5 L653.5 240.5 L653.0 240.5 L652.5 240.5 L652.0 240.5 L651.5 240.5 L651.0 240.5 L650.5 240.5 L650.0 240.5 L649.5 240.5 L649.0 240.5 L648.5 240.5 L648.0 240.5 L647.5 240.5 L647.0 240.5 L646.5 240.5 L646.0 240.5 L645.5 240.5 L645.0 240.5 L644.5 240.5 L644.0 240.5 L643.5 240.5 L643.0 240.5 L642.5 240.5 L642.0 240.5 L641.5 240.5 L641.0 240.5 L640.5 240.5 L640.0 240.5 L639.5 240.5 L639.0 240.5 L638.5 240.5 L638.0 240.5 L637.5 240.5 L637.0 240.5 L636.5 240.5 L636.0 240.5 L635.5 240.6 L635.0 240.5 L634.5 240.5 L634.0 240.5 L633.5 240.5 L633.0 240.5 L632.5 240.5 L632.0 240.5 L631.5 240.5 L631.0 240.5 L630.5 240.5 L630.0 240.5 L629.5 240.5 L629.0 240.5 L628.5 240.5 L628.0 240.5 L627.5 240.5 L627.0 240.5 L626.5 240.5 L626.0 240.5 L625.5 240.5 L625.0 240.5 L624.5 240.5 L624.0 240.5 L623.5 240.6 L623.0 240.6 L622.5 240.5 L622.0 240.5 L621.5 240.5 L621.0 240.6 L620.5 240.5 L620.0 240.5 L619.5 240.5 L619.0 240.6 L618.5 240.5 L618.0 240.6 L617.5 240.6 L617.0 240.5 L616.5 240.6 L616.0 240.7 L615.5 240.5 L615.0 240.5 L614.5 240.7 L614.0 240.6 L613.5 240.6 L613.0 240.5 L612.5 240.5 L612.0 240.7 L611.5 240.7 L611.0 240.6 L610.5 240.5 L610.0 240.6 L609.5 240.6 L609.0 240.6 L608.5 240.7 L608.0 240.6 L607.5 240.7 L607.0 240.8 L606.5 240.5 L606.0 240.9 L605.5 240.7 L605.0 240.7 L604.5 240.7 L604.0 240.8 L603.5 240.7 L603.0 240.6 L602.5 240.8 L602.0 240.5 L601.5 240.5 L601.0 240.7 L600.5 240.7 L600.0 240.6 L599.5 240.6 L599.0 240.6 L598.5 241.0 L598.0 240.7 L597.5 240.7 L597.0 240.8 L596.5 240.6 L596.0 240.6 L595.5 240.6 L595.0 240.9 L594.5 240.5 L594.0 240.6 L593.5 241.1 L593.0 240.6 L592.5 240.6 L592.0 240.8 L591.5 240.8 L591.0 240.7 L590.5 240.8 L590.0 240.9 L589.5 240.8 L589.0 240.9 L588.5 240.7 L588.0 240.8 L587.5 241.1 L587.0 240.7 L586.5 240.7 L586.0 240.9 L585.5 240.9 L585.0 241.1 L584.5 241.1 L584.0 241.1 L583.5 241.1 L583.0 240.7 L582.5 241.0 L582.0 241.1 L581.5 240.8 L581.0 240.9 L580.5 241.2 L580.0 241.2 L579.5 241.1 L579.0 240.8 L578.5 240.8 L578.0 241.0 L577.5 241.0 L577.0 240.9 L576.5 241.2 L576.0 241.0 L575.5 240.9 L575.0 241.2 L574.5 241.3 L574.0 241.3 L573.5 241.2 L573.0 241.4 L572.5 241.0 L572.0 241.4 L571.5 241.2 L571.0 241.3 L570.5 240.8 L570.0 241.1 L569.5 241.8 L569.0 241.2 L568.5 241.0 L568.0 241.4 L567.5 241.2 L567.0 241.5 L566.5 241.1 L566.0 241.4 L565.5 241.3 L565.0 241.1 L564.5 241.5 L564.0 241.3 L563.5 241.3 L563.0 241.4 L562.5 241.5 L562.0 241.4 L561.5 241.7 L561.0 241.7 L560.5 241.3 L560.0 241.4 L559.5 241.3 L559.0 241.7 L558.5 241.1 L558.0 241.3 L557.5 241.7 L557.0 241.5 L556.5 241.9 L556.0 241.6 L555.5 241.9 L555.0 241.4 L554.5 241.2 L554.0 241.2 L553.5 241.3 L553.0 242.1 L552.5 241.3 L552.0 242.1 L551.5 242.0 L551.0 241.9 L550.5 241.7 L550.0 242.5 L549.5 242.2 L549.0 242.3 L548.5 242.2 L548.0 241.3 L547.5 241.4 L547.0 243.2 L546.5 241.8 L546.0 241.4 L545.5 242.4 L545.0 241.8 L544.5 241.5 L544.0 241.8 L543.5 242.0 L543.0 241.9 L542.5 242.3 L542.0 242.3 L541.5 241.6 L541.0 241.6 L540.5 242.1 L540.0 242.5 L539.5 242.5 L539.0 242.0 L538.5 242.2 L538.0 241.9 L537.5 242.1 L537.0 242.9 L536.5 242.2 L536.0 242.5 L535.5 242.9 L535.0 242.9 L534.5 243.0 L534.0 242.1 L533.5 242.5 L533.0 241.9 L532.5 243.1 L532.0 243.6 L531.5 243.4 L531.0 243.0 L530.5 243.3 L530.0 242.7 L529.5 243.3 L529.0 243.3 L528.5 242.8 L528.0 244.1 L527.5 243.9 L527.0 243.0 L526.5 243.8 L526.0 242.6 L525.5 243.6 L525.0 243.2 L524.5 244.1 L524.0 243.3 L523.5 244.3 L523.0 244.0 L522.5 243.6 L522.0 243.6 L521.5 244.0 L521.0 243.7 L520.5 243.9 L520.0 244.1 L519.5 243.3 L519.0 243.0 L518.5 243.5 L518.0 243.7 L517.5 244.4 L517.0 243.2 L516.5 244.4 L516.0 244.7 L515.5 244.7 L515.0 246.0 L514.5 244.5 L514.0 244.6 L513.5 245.3 L513.0 245.2 L512.5 243.4 L512.0 245.7 L511.5 243.9 L511.0 245.4 L510.5 244.8 L510.0 247.0 L509.5 244.3 L509.0 243.7 L508.5 243.7 L508.0 245.0 L507.5 246.2 L507.0 247.9 L506.5 244.4 L506.0 246.8 L505.5 244.0 L505.0 244.9 L504.5 245.1 L504.0 244.7 L503.5 245.9 L503.0 247.0 L502.5 244.5 L502.0 244.4 L501.5 246.4 L501.0 247.6 L500.5 246.0 L500.0 246.3 L499.5 245.6 L499.0 247.3 L498.5 247.2 L498.0 248.7 L497.5 249.1 L497.0 245.1 L496.5 247.1 L496.0 249.3 L495.5 248.4 L495.0 247.2 L494.5 249.3 L494.0 245.5 L493.5 247.6 L493.0 246.9 L492.5 247.5 L492.0 249.8 L491.5 246.1 L491.0 250.3 L490.5 247.5 L490.0 249.2 L489.5 247.1 L489.0 251.5 L488.5 248.3 L488.0 247.7 L487.5 248.4 L487.0 255.6 L486.5 250.6 L486.0 250.8 L485.5 250.0 L485.0 248.2 L484.5 247.5 L484.0 253.4 L483.5 252.8 L483.0 249.5 L482.5 251.4 L482.0 251.2 L481.5 251.5 L481.0 252.8 L480.5 258.5 L480.0 254.5 L479.5 251.1 L479.0 251.8 L478.5 252.5 L478.0 258.1 L477.5 249.1 L477.0 255.4 L476.5 255.3 L476.0 251.2 L475.5 254.4 L475.0 253.5 L474.5 256.9 L474.0 254.2 L473.5 257.0 L473.0 260.2 L472.5 258.6 L472.0 255.3 L471.5 252.3 L471.0 257.3 L470.5 259.9 L470.0 255.4 L469.5 256.6 L469.0 254.0 L468.5 260.1 L468.0 258.6 L467.5 259.0 L467.0 260.5 L466.5 257.5 L466.0 262.4 L465.5 255.5 L465.0 253.3 L464.5 252.6 L464.0 258.2 L463.5 246.5 L463.0 245.4 L462.5 245.7 L462.0 245.1Z" fill="#747476"/><path d="M462.0 296.1 L462.5 296.6 L463.0 295.8 L463.5 295.1 L464.0 290.7 L464.5 294.8 L465.0 291.2 L465.5 291.0 L466.0 287.5 L466.5 284.0 L467.0 285.2 L467.5 283.4 L468.0 287.9 L468.5 287.8 L469.0 278.5 L469.5 276.5 L470.0 274.5 L470.5 276.5 L471.0 278.5 L471.5 290.7 L472.0 288.4 L472.5 286.4 L473.0 288.6 L473.5 293.0 L474.0 288.0 L474.5 286.0 L475.0 284.0 L475.5 286.0 L476.0 288.0 L476.5 281.7 L477.0 290.5 L477.5 294.6 L478.0 289.0 L478.5 292.0 L479.0 294.5 L479.5 291.6 L480.0 289.5 L480.5 295.4 L481.0 295.5 L481.5 292.8 L482.0 294.5 L482.5 292.4 L483.0 290.0 L483.5 293.9 L484.0 295.7 L484.5 293.6 L485.0 295.4 L485.5 294.3 L486.0 294.5 L486.5 292.7 L487.0 293.8 L487.5 296.9 L488.0 288.9 L488.5 295.2 L489.0 296.9 L489.5 297.0 L490.0 294.0 L490.5 292.0 L491.0 290.0 L491.5 292.0 L492.0 294.0 L492.5 295.5 L493.0 294.0 L493.5 295.9 L494.0 294.3 L494.5 296.7 L495.0 297.9 L495.5 295.7 L496.0 295.7 L496.5 294.0 L497.0 292.0 L497.5 294.0 L498.0 295.0 L498.5 297.1 L499.0 298.1 L499.5 296.3 L500.0 295.5 L500.5 296.3 L501.0 297.6 L501.5 299.0 L502.0 294.5 L502.5 296.8 L503.0 298.8 L503.5 296.9 L504.0 298.8 L504.5 297.6 L505.0 299.2 L505.5 297.5 L506.0 298.5 L506.5 299.3 L507.0 297.4 L507.5 297.2 L508.0 296.6 L508.5 297.1 L509.0 298.6 L509.5 298.5 L510.0 297.7 L510.5 298.2 L511.0 298.3 L511.5 298.0 L512.0 298.9 L512.5 299.8 L513.0 299.3 L513.5 299.1 L514.0 299.2 L514.5 300.0 L515.0 299.4 L515.5 298.5 L516.0 299.6 L516.5 298.9 L517.0 298.6 L517.5 299.8 L518.0 299.7 L518.5 299.5 L519.0 300.3 L519.5 298.7 L520.0 299.5 L520.5 300.1 L521.0 298.9 L521.5 300.2 L522.0 300.3 L522.5 298.9 L523.0 299.2 L523.5 299.9 L524.0 299.8 L524.5 300.0 L525.0 299.9 L525.5 299.2 L526.0 300.1 L526.5 300.8 L527.0 300.9 L527.5 300.9 L528.0 300.0 L528.5 301.0 L529.0 300.2 L529.5 300.8 L530.0 300.1 L530.5 301.0 L531.0 301.1 L531.5 300.0 L532.0 299.9 L532.5 300.4 L533.0 300.7 L533.5 300.2 L534.0 300.3 L534.5 299.4 L535.0 301.1 L535.5 300.6 L536.0 301.4 L536.5 300.7 L537.0 300.6 L537.5 300.2 L538.0 301.2 L538.5 300.4 L539.0 300.7 L539.5 300.7 L540.0 301.2 L540.5 300.5 L541.0 300.7 L541.5 301.1 L542.0 301.4 L542.5 301.5 L543.0 301.0 L543.5 301.3 L544.0 301.7 L544.5 301.4 L545.0 301.3 L545.5 301.1 L546.0 301.4 L546.5 301.1 L547.0 301.6 L547.5 301.6 L548.0 301.1 L548.5 301.8 L549.0 301.5 L549.5 301.4 L550.0 301.4 L550.5 301.3 L551.0 301.4 L551.5 301.2 L552.0 301.7 L552.5 301.8 L553.0 301.4 L553.5 301.9 L554.0 301.7 L554.5 301.7 L555.0 301.9 L555.5 301.5 L556.0 301.2 L556.5 302.0 L557.0 301.3 L557.5 301.7 L558.0 302.0 L558.5 301.5 L559.0 301.9 L559.5 301.4 L560.0 301.5 L560.5 301.7 L561.0 301.7 L561.5 302.0 L562.0 301.4 L562.5 301.8 L563.0 302.0 L563.5 302.1 L564.0 301.8 L564.5 301.9 L565.0 301.5 L565.5 302.0 L566.0 301.8 L566.5 302.0 L567.0 301.9 L567.5 301.7 L568.0 301.8 L568.5 301.9 L569.0 301.6 L569.5 301.8 L570.0 302.2 L570.5 302.0 L571.0 301.7 L571.5 301.8 L572.0 302.1 L572.5 301.7 L573.0 302.2 L573.5 302.0 L574.0 302.0 L574.5 301.9 L575.0 301.8 L575.5 302.0 L576.0 302.2 L576.5 302.1 L577.0 302.2 L577.5 302.2 L578.0 302.1 L578.5 302.1 L579.0 302.2 L579.5 301.9 L580.0 302.3 L580.5 302.4 L581.0 301.9 L581.5 302.3 L582.0 301.9 L582.5 301.9 L583.0 302.2 L583.5 301.7 L584.0 302.3 L584.5 301.9 L585.0 302.1 L585.5 302.2 L586.0 302.1 L586.5 302.4 L587.0 302.0 L587.5 302.0 L588.0 302.5 L588.5 302.1 L589.0 302.1 L589.5 302.5 L590.0 302.1 L590.5 302.4 L591.0 302.3 L591.5 302.2 L592.0 302.4 L592.5 302.2 L593.0 302.4 L593.5 302.5 L594.0 302.2 L594.5 302.2 L595.0 302.5 L595.5 302.3 L596.0 302.4 L596.5 302.4 L597.0 302.4 L597.5 302.5 L598.0 302.5 L598.5 302.4 L599.0 302.0 L599.5 302.4 L600.0 302.5 L600.5 302.3 L601.0 302.3 L601.5 302.3 L602.0 302.4 L602.5 302.3 L603.0 302.3 L603.5 302.5 L604.0 302.3 L604.5 302.4 L605.0 302.3 L605.5 302.4 L606.0 302.4 L606.5 302.3 L607.0 302.3 L607.5 302.5 L608.0 302.4 L608.5 302.4 L609.0 302.3 L609.5 302.5 L610.0 302.2 L610.5 302.5 L611.0 302.5 L611.5 302.5 L612.0 302.1 L612.5 302.4 L613.0 302.4 L613.5 302.5 L614.0 302.4 L614.5 302.5 L615.0 302.4 L615.5 302.5 L616.0 302.4 L616.5 302.5 L617.0 302.5 L617.5 302.4 L618.0 302.5 L618.5 302.5 L619.0 302.5 L619.5 302.5 L620.0 302.5 L620.5 302.4 L621.0 302.5 L621.5 302.4 L622.0 302.5 L622.5 302.5 L623.0 302.5 L623.5 302.5 L624.0 302.5 L624.5 302.4 L625.0 302.5 L625.5 302.5 L626.0 302.5 L626.5 302.5 L627.0 302.5 L627.5 302.5 L628.0 302.5 L628.5 302.5 L629.0 302.4 L629.5 302.5 L630.0 302.5 L630.5 302.5 L631.0 302.5 L631.5 302.5 L632.0 302.5 L632.5 302.5 L633.0 302.5 L633.5 302.5 L634.0 302.5 L634.5 302.4 L635.0 302.5 L635.5 302.5 L636.0 302.5 L636.5 302.5 L637.0 302.5 L637.5 302.5 L638.0 302.5 L638.5 302.5 L639.0 302.5 L639.5 302.5 L640.0 302.5 L640.5 302.5 L641.0 302.5 L641.5 302.5 L642.0 302.5 L642.5 302.5 L643.0 302.5 L643.5 302.5 L644.0 302.5 L644.5 302.4 L645.0 302.5 L645.5 302.5 L646.0 302.5 L646.5 302.5 L647.0 302.5 L647.5 302.5 L648.0 302.5 L648.5 302.5 L649.0 302.4 L649.5 302.5 L650.0 302.5 L650.5 302.5 L651.0 302.5 L651.5 302.5 L652.0 302.5 L652.5 302.5 L653.0 302.5 L653.5 302.5 L654.0 302.5 L654.5 302.5 L655.0 302.5 L655.5 302.5 L656.0 302.5 L656.5 302.5 L657.0 302.5 L657.5 302.5 L658.0 302.5 L658.5 302.5 L659.0 302.5 L659.5 302.5 L660.0 302.5 L660.5 302.5 L661.0 302.5 L661.5 302.5 L662.0 302.5 L662.5 302.5 L663.0 302.5 L663.5 302.5 L664.0 302.5 L664.5 302.5 L665.0 302.5 L665.5 302.5 L666.0 302.5 L666.5 302.5 L667.0 302.5 L667.5 302.5 L668.0 302.5 L668.5 302.5 L669.0 302.5 L669.5 302.5 L670.0 302.5 L670.5 302.5 L671.0 302.5 L671.5 302.5 L672.0 302.5 L672.5 302.5 L673.0 302.5 L673.5 302.5 L674.0 302.5 L674.5 302.5 L675.0 302.5 L675.5 302.5 L676.0 302.5 L676.5 302.5 L677.0 302.5 L677.5 302.5 L678.0 302.5 L678.5 302.5 L679.0 302.5 L679.5 302.5 L680.0 302.5 L680.5 302.5 L681.0 302.5 L681.5 302.5 L682.0 302.5 L682.5 302.5 L683.0 302.5 L683.5 302.5 L684.0 302.5 L684.5 302.5 L685.0 302.5 L685.5 302.5 L686.0 302.5 L686.5 302.5 L687.0 302.5 L687.5 302.5 L688.0 302.5 L688.5 302.5 L689.0 302.5 L689.5 302.5 L690.0 302.5 L690.5 302.5 L691.0 302.5 L691.5 302.5 L692.0 302.5 L692.5 302.5 L693.0 302.5 L693.5 302.5 L694.0 302.5 L694.5 302.5 L695.0 302.5 L695.5 302.5 L696.0 302.5 L696.5 302.5 L697.0 302.5 L697.5 302.5 L698.0 302.5 L698.5 302.5 L699.0 302.5 L699.5 302.5 L700.0 302.5 L700.5 302.5 L701.0 302.5 L701.5 302.5 L702.0 302.5 L702.5 302.5 L703.0 302.5 L703.5 302.5 L704.0 302.5 L704.5 302.5 L705.0 302.5 L705.5 302.5 L706.0 302.5 L706.5 302.5 L707.0 302.5 L707.5 302.5 L708.0 302.5 L708.5 302.5 L709.0 302.5 L709.5 302.5 L710.0 302.5 L710.5 302.5 L711.0 302.5 L711.5 302.5 L712.0 302.5 L712.5 302.5 L713.0 302.5 L713.5 302.5 L714.0 302.5 L714.5 302.5 L715.0 302.5 L715.5 302.5 L716.0 302.5 L716.5 302.5 L717.0 302.5 L717.5 302.5 L718.0 302.5 L718.5 302.5 L719.0 302.5 L719.5 302.5 L720.0 302.5 L720.5 302.5 L721.0 302.5 L721.5 302.5 L722.0 302.5 L722.5 302.5 L723.0 302.5 L723.5 302.5 L724.0 302.5 L724.5 302.5 L725.0 302.5 L725.5 302.5 L726.0 302.5 L726.5 302.5 L727.0 302.5 L727.5 302.5 L728.0 302.5 L728.5 302.5 L729.0 302.5 L729.5 302.5 L730.0 302.5 L730.5 302.5 L731.0 302.5 L731.5 302.5 L732.0 302.5 L732.5 302.5 L733.0 302.5 L733.5 302.5 L734.0 302.5 L734.5 302.5 L735.0 302.5 L735.5 302.5 L736.0 302.5 L736.5 302.5 L737.0 302.5 L737.5 302.5 L738.0 302.5 L738.5 302.5 L739.0 302.5 L739.5 302.5 L740.0 302.5 L740.5 302.5 L741.0 302.5 L741.5 302.5 L742.0 302.5 L742.5 302.5 L743.0 302.5 L743.5 302.5 L744.0 302.5 L744.5 302.5 L745.0 302.5 L745.5 302.5 L746.0 302.5 L746.5 302.5 L747.0 302.5 L747.5 302.5 L748.0 302.5 L748.5 302.5 L749.0 302.5 L749.5 302.5 L750.0 302.5 L750.5 302.5 L751.0 302.5 L751.5 302.5 L752.0 302.5 L752.5 302.5 L753.0 302.5 L753.5 302.5 L754.0 302.5 L754.5 302.5 L755.0 302.5 L755.5 302.5 L756.0 302.5 L756.5 302.5 L757.0 302.5 L757.5 302.5 L758.0 302.5 L758.5 302.5 L759.0 302.5 L759.5 302.5 L760.0 302.5 L760.5 302.5 L761.0 302.5 L761.5 302.5 L762.0 302.5 L762.5 302.5 L763.0 302.5 L763.5 302.5 L764.0 302.5 L764.5 302.5 L765.0 302.5 L765.5 302.5 L766.0 302.5 L766.5 302.5 L767.0 302.5 L767.5 302.5 L768.0 302.5 L768.5 302.5 L769.0 302.5 L769.5 302.5 L770.0 302.5 L770.5 302.5 L771.0 302.5 L771.5 302.5 L772.0 302.5 L772.5 302.5 L773.0 302.5 L773.5 302.5 L774.0 302.5 L774.5 302.5 L775.0 302.5 L775.5 302.5 L776.0 302.5 L776.5 302.5 L777.0 302.5 L777.5 302.5 L778.0 302.5 L778.5 302.5 L779.0 302.5 L779.5 302.5 L780.0 302.5 L780.5 302.5 L781.0 302.5 L781.5 302.5 L782.0 302.5 L782.5 302.5 L783.0 302.5 L783.5 302.5 L784.0 302.5 L784.5 302.5 L785.0 302.5 L785.5 302.5 L786.0 302.5 L786.5 302.5 L787.0 302.5 L787.5 302.5 L788.0 302.5 L788.5 302.5 L789.0 302.5 L789.5 302.5 L790.0 302.5 L790.0 303.5 L789.5 303.5 L789.0 303.5 L788.5 303.5 L788.0 303.5 L787.5 303.5 L787.0 303.5 L786.5 303.5 L786.0 303.5 L785.5 303.5 L785.0 303.5 L784.5 303.5 L784.0 303.5 L783.5 303.5 L783.0 303.5 L782.5 303.5 L782.0 303.5 L781.5 303.5 L781.0 303.5 L780.5 303.5 L780.0 303.5 L779.5 303.5 L779.0 303.5 L778.5 303.5 L778.0 303.5 L777.5 303.5 L777.0 303.5 L776.5 303.5 L776.0 303.5 L775.5 303.5 L775.0 303.5 L774.5 303.5 L774.0 303.5 L773.5 303.5 L773.0 303.5 L772.5 303.5 L772.0 303.5 L771.5 303.5 L771.0 303.5 L770.5 303.5 L770.0 303.5 L769.5 303.5 L769.0 303.5 L768.5 303.5 L768.0 303.5 L767.5 303.5 L767.0 303.5 L766.5 303.5 L766.0 303.5 L765.5 303.5 L765.0 303.5 L764.5 303.5 L764.0 303.5 L763.5 303.5 L763.0 303.5 L762.5 303.5 L762.0 303.5 L761.5 303.5 L761.0 303.5 L760.5 303.5 L760.0 303.5 L759.5 303.5 L759.0 303.5 L758.5 303.5 L758.0 303.5 L757.5 303.5 L757.0 303.5 L756.5 303.5 L756.0 303.5 L755.5 303.5 L755.0 303.5 L754.5 303.5 L754.0 303.5 L753.5 303.5 L753.0 303.5 L752.5 303.5 L752.0 303.5 L751.5 303.5 L751.0 303.5 L750.5 303.5 L750.0 303.5 L749.5 303.5 L749.0 303.5 L748.5 303.5 L748.0 303.5 L747.5 303.5 L747.0 303.5 L746.5 303.5 L746.0 303.5 L745.5 303.5 L745.0 303.5 L744.5 303.5 L744.0 303.5 L743.5 303.5 L743.0 303.5 L742.5 303.5 L742.0 303.5 L741.5 303.5 L741.0 303.5 L740.5 303.5 L740.0 303.5 L739.5 303.5 L739.0 303.5 L738.5 303.5 L738.0 303.5 L737.5 303.5 L737.0 303.5 L736.5 303.5 L736.0 303.5 L735.5 303.5 L735.0 303.5 L734.5 303.5 L734.0 303.5 L733.5 303.5 L733.0 303.5 L732.5 303.5 L732.0 303.5 L731.5 303.5 L731.0 303.5 L730.5 303.5 L730.0 303.5 L729.5 303.5 L729.0 303.5 L728.5 303.5 L728.0 303.5 L727.5 303.5 L727.0 303.5 L726.5 303.5 L726.0 303.5 L725.5 303.5 L725.0 303.5 L724.5 303.5 L724.0 303.5 L723.5 303.5 L723.0 303.5 L722.5 303.5 L722.0 303.5 L721.5 303.5 L721.0 303.5 L720.5 303.5 L720.0 303.5 L719.5 303.5 L719.0 303.5 L718.5 303.5 L718.0 303.5 L717.5 303.5 L717.0 303.5 L716.5 303.5 L716.0 303.5 L715.5 303.5 L715.0 303.5 L714.5 303.5 L714.0 303.5 L713.5 303.5 L713.0 303.5 L712.5 303.5 L712.0 303.5 L711.5 303.5 L711.0 303.5 L710.5 303.5 L710.0 303.5 L709.5 303.5 L709.0 303.5 L708.5 303.5 L708.0 303.5 L707.5 303.5 L707.0 303.5 L706.5 303.5 L706.0 303.5 L705.5 303.5 L705.0 303.5 L704.5 303.5 L704.0 303.5 L703.5 303.5 L703.0 303.5 L702.5 303.5 L702.0 303.5 L701.5 303.5 L701.0 303.5 L700.5 303.5 L700.0 303.5 L699.5 303.5 L699.0 303.5 L698.5 303.5 L698.0 303.5 L697.5 303.5 L697.0 303.5 L696.5 303.5 L696.0 303.5 L695.5 303.5 L695.0 303.5 L694.5 303.5 L694.0 303.5 L693.5 303.5 L693.0 303.5 L692.5 303.5 L692.0 303.5 L691.5 303.5 L691.0 303.5 L690.5 303.5 L690.0 303.5 L689.5 303.5 L689.0 303.5 L688.5 303.5 L688.0 303.5 L687.5 303.5 L687.0 303.5 L686.5 303.5 L686.0 303.5 L685.5 303.5 L685.0 303.5 L684.5 303.5 L684.0 303.5 L683.5 303.5 L683.0 303.5 L682.5 303.5 L682.0 303.5 L681.5 303.5 L681.0 303.5 L680.5 303.5 L680.0 303.5 L679.5 303.5 L679.0 303.5 L678.5 303.5 L678.0 303.5 L677.5 303.5 L677.0 303.5 L676.5 303.5 L676.0 303.5 L675.5 303.5 L675.0 303.5 L674.5 303.5 L674.0 303.5 L673.5 303.5 L673.0 303.5 L672.5 303.5 L672.0 303.5 L671.5 303.5 L671.0 303.5 L670.5 303.5 L670.0 303.5 L669.5 303.5 L669.0 303.5 L668.5 303.5 L668.0 303.5 L667.5 303.5 L667.0 303.5 L666.5 303.5 L666.0 303.5 L665.5 303.5 L665.0 303.5 L664.5 303.5 L664.0 303.5 L663.5 303.5 L663.0 303.5 L662.5 303.5 L662.0 303.5 L661.5 303.5 L661.0 303.5 L660.5 303.5 L660.0 303.5 L659.5 303.5 L659.0 303.5 L658.5 303.5 L658.0 303.5 L657.5 303.5 L657.0 303.5 L656.5 303.5 L656.0 303.5 L655.5 303.5 L655.0 303.5 L654.5 303.5 L654.0 303.5 L653.5 303.5 L653.0 303.5 L652.5 303.5 L652.0 303.5 L651.5 303.5 L651.0 303.5 L650.5 303.5 L650.0 303.5 L649.5 303.5 L649.0 303.5 L648.5 303.5 L648.0 303.5 L647.5 303.5 L647.0 303.5 L646.5 303.5 L646.0 303.5 L645.5 303.5 L645.0 303.5 L644.5 303.5 L644.0 303.5 L643.5 303.5 L643.0 303.5 L642.5 303.5 L642.0 303.5 L641.5 303.5 L641.0 303.5 L640.5 303.5 L640.0 303.5 L639.5 303.5 L639.0 303.5 L638.5 303.5 L638.0 303.5 L637.5 303.5 L637.0 303.5 L636.5 303.5 L636.0 303.5 L635.5 303.5 L635.0 303.5 L634.5 303.5 L634.0 303.5 L633.5 303.5 L633.0 303.5 L632.5 303.5 L632.0 303.5 L631.5 303.5 L631.0 303.5 L630.5 303.5 L630.0 303.5 L629.5 303.5 L629.0 303.5 L628.5 303.5 L628.0 303.5 L627.5 303.5 L627.0 303.5 L626.5 303.5 L626.0 303.5 L625.5 303.5 L625.0 303.5 L624.5 303.5 L624.0 303.5 L623.5 303.5 L623.0 303.5 L622.5 303.5 L622.0 303.5 L621.5 303.5 L621.0 303.5 L620.5 303.5 L620.0 303.5 L619.5 303.5 L619.0 303.5 L618.5 303.5 L618.0 303.5 L617.5 303.5 L617.0 303.5 L616.5 303.5 L616.0 303.6 L615.5 303.6 L615.0 303.6 L614.5 303.5 L614.0 303.8 L613.5 303.5 L613.0 303.7 L612.5 303.6 L612.0 303.6 L611.5 303.6 L611.0 303.6 L610.5 303.5 L610.0 303.7 L609.5 303.5 L609.0 303.6 L608.5 303.5 L608.0 303.7 L607.5 303.7 L607.0 303.6 L606.5 303.7 L606.0 303.7 L605.5 303.7 L605.0 303.5 L604.5 303.7 L604.0 303.6 L603.5 303.5 L603.0 303.6 L602.5 303.8 L602.0 303.8 L601.5 303.6 L601.0 303.7 L600.5 303.6 L600.0 303.6 L599.5 303.6 L599.0 303.5 L598.5 303.5 L598.0 303.5 L597.5 303.8 L597.0 303.7 L596.5 303.6 L596.0 303.6 L595.5 303.6 L595.0 303.8 L594.5 303.5 L594.0 303.6 L593.5 303.8 L593.0 303.6 L592.5 303.7 L592.0 303.7 L591.5 303.6 L591.0 303.6 L590.5 303.7 L590.0 303.9 L589.5 303.8 L589.0 303.9 L588.5 303.9 L588.0 303.6 L587.5 303.9 L587.0 304.0 L586.5 303.9 L586.0 304.0 L585.5 304.0 L585.0 303.7 L584.5 303.7 L584.0 303.8 L583.5 303.7 L583.0 303.6 L582.5 304.1 L582.0 303.7 L581.5 303.9 L581.0 304.1 L580.5 304.0 L580.0 304.0 L579.5 304.1 L579.0 303.8 L578.5 303.7 L578.0 303.8 L577.5 304.1 L577.0 304.2 L576.5 303.8 L576.0 304.2 L575.5 303.8 L575.0 304.3 L574.5 303.7 L574.0 303.7 L573.5 304.0 L573.0 304.2 L572.5 304.0 L572.0 303.8 L571.5 304.3 L571.0 304.1 L570.5 304.4 L570.0 304.2 L569.5 304.0 L569.0 304.0 L568.5 304.2 L568.0 304.2 L567.5 304.1 L567.0 304.2 L566.5 304.4 L566.0 304.3 L565.5 304.4 L565.0 304.9 L564.5 304.1 L564.0 304.1 L563.5 304.4 L563.0 304.3 L562.5 304.6 L562.0 304.3 L561.5 304.3 L561.0 304.3 L560.5 304.6 L560.0 304.1 L559.5 304.4 L559.0 304.6 L558.5 304.7 L558.0 304.5 L557.5 304.4 L557.0 304.1 L556.5 304.6 L556.0 304.1 L555.5 304.8 L555.0 304.8 L554.5 304.4 L554.0 304.7 L553.5 304.7 L553.0 305.0 L552.5 304.4 L552.0 304.2 L551.5 304.7 L551.0 304.3 L550.5 304.2 L550.0 305.0 L549.5 304.6 L549.0 304.7 L548.5 304.9 L548.0 304.8 L547.5 305.0 L547.0 304.6 L546.5 304.8 L546.0 304.4 L545.5 304.5 L545.0 305.4 L544.5 304.6 L544.0 305.4 L543.5 304.6 L543.0 305.2 L542.5 305.1 L542.0 305.0 L541.5 304.8 L541.0 305.0 L540.5 304.7 L540.0 305.2 L539.5 304.9 L539.0 305.1 L538.5 305.3 L538.0 305.7 L537.5 305.8 L537.0 305.4 L536.5 304.7 L536.0 305.7 L535.5 305.7 L535.0 305.0 L534.5 305.7 L534.0 306.2 L533.5 305.6 L533.0 305.4 L532.5 305.1 L532.0 305.1 L531.5 306.2 L531.0 305.2 L530.5 305.1 L530.0 306.3 L529.5 306.4 L529.0 306.0 L528.5 306.5 L528.0 305.2 L527.5 305.7 L527.0 306.5 L526.5 306.7 L526.0 305.2 L525.5 306.7 L525.0 306.3 L524.5 306.4 L524.0 306.0 L523.5 306.9 L523.0 306.1 L522.5 306.8 L522.0 305.9 L521.5 306.3 L521.0 305.6 L520.5 306.8 L520.0 306.0 L519.5 307.4 L519.0 305.6 L518.5 307.5 L518.0 306.0 L517.5 307.1 L517.0 307.8 L516.5 307.9 L516.0 307.8 L515.5 307.3 L515.0 306.7 L514.5 306.5 L514.0 307.5 L513.5 306.7 L513.0 306.2 L512.5 308.2 L512.0 306.7 L511.5 307.8 L511.0 307.2 L510.5 307.3 L510.0 307.1 L509.5 307.8 L509.0 308.8 L508.5 307.5 L508.0 307.3 L507.5 306.9 L507.0 307.8 L506.5 308.9 L506.0 309.1 L505.5 309.1 L505.0 306.8 L504.5 308.3 L504.0 308.9 L503.5 308.9 L503.0 309.7 L502.5 309.1 L502.0 309.9 L501.5 308.8 L501.0 309.6 L500.5 310.4 L500.0 308.6 L499.5 310.9 L499.0 309.4 L498.5 307.7 L498.0 310.6 L497.5 309.5 L497.0 309.8 L496.5 310.0 L496.0 310.7 L495.5 308.5 L495.0 308.4 L494.5 312.4 L494.0 310.7 L493.5 309.4 L493.0 312.1 L492.5 310.6 L492.0 310.6 L491.5 312.2 L491.0 316.8 L490.5 309.4 L490.0 311.1 L489.5 312.7 L489.0 310.5 L488.5 311.6 L488.0 312.7 L487.5 312.9 L487.0 311.0 L486.5 311.5 L486.0 312.5 L485.5 315.9 L485.0 314.9 L484.5 312.6 L484.0 311.1 L483.5 310.8 L483.0 317.0 L482.5 315.2 L482.0 313.2 L481.5 316.7 L481.0 311.7 L480.5 318.4 L480.0 312.6 L479.5 313.7 L479.0 314.2 L478.5 312.9 L478.0 316.7 L477.5 314.7 L477.0 317.0 L476.5 312.9 L476.0 322.0 L475.5 314.0 L475.0 319.5 L474.5 315.2 L474.0 319.4 L473.5 316.8 L473.0 315.0 L472.5 318.6 L472.0 313.8 L471.5 315.1 L471.0 317.9 L470.5 316.3 L470.0 315.3 L469.5 318.3 L469.0 318.3 L468.5 322.0 L468.0 319.5 L467.5 316.0 L467.0 321.9 L466.5 322.0 L466.0 323.9 L465.5 313.7 L465.0 319.3 L464.5 311.5 L464.0 313.5 L463.5 311.2 L463.0 310.6 L462.5 309.4 L462.0 308.1Z" fill="#747476"/><rect x="299.31" y="198" width="1.20" height="135.5" fill="rgba(0,0,0,0.1)"/><rect x="304.52" y="198" width="1.20" height="135.5" fill="rgba(0,0,0,0.1)"/><rect x="309.74" y="198" width="1.20" height="135.5" fill="rgba(0,0,0,0.1)"/><rect x="314.95" y="198" width="1.20" height="135.5" fill="rgba(0,0,0,0.1)"/><rect x="320.16" y="198" width="1.20" height="135.5" fill="rgba(0,0,0,0.1)"/><rect x="325.37" y="198" width="1.20" height="135.5" fill="rgba(0,0,0,0.1)"/><rect x="330.59" y="198" width="1.20" height="135.5" fill="rgba(0,0,0,0.1)"/><rect x="335.80" y="198" width="1.20" height="135.5" fill="rgba(0,0,0,0.1)"/><rect x="341.01" y="198" width="1.20" height="135.5" fill="rgba(0,0,0,0.1)"/><rect x="346.22" y="198" width="1.20" height="135.5" fill="rgba(0,0,0,0.1)"/><rect x="351.44" y="198" width="1.20" height="135.5" fill="rgba(0,0,0,0.1)"/><rect x="356.65" y="198" width="1.20" height="135.5" fill="rgba(0,0,0,0.1)"/><rect x="361.86" y="198" width="1.20" height="135.5" fill="rgba(0,0,0,0.1)"/><rect x="367.07" y="198" width="1.20" height="135.5" fill="rgba(0,0,0,0.1)"/><rect x="372.29" y="198" width="1.20" height="135.5" fill="rgba(0,0,0,0.1)"/><rect x="377.50" y="198" width="1.20" height="135.5" fill="rgba(0,0,0,0.1)"/><rect x="382.71" y="198" width="1.20" height="135.5" fill="rgba(0,0,0,0.1)"/><rect x="387.92" y="198" width="1.20" height="135.5" fill="rgba(0,0,0,0.1)"/><rect x="393.14" y="198" width="1.20" height="135.5" fill="rgba(0,0,0,0.1)"/><rect x="398.35" y="198" width="1.20" height="135.5" fill="rgba(0,0,0,0.1)"/><rect x="403.56" y="198" width="1.20" height="135.5" fill="rgba(0,0,0,0.1)"/><rect x="408.77" y="198" width="1.20" height="135.5" fill="rgba(0,0,0,0.1)"/><rect x="413.99" y="198" width="1.20" height="135.5" fill="rgba(0,0,0,0.1)"/><rect x="419.20" y="198" width="1.20" height="135.5" fill="rgba(0,0,0,0.1)"/><rect x="424.41" y="198" width="1.20" height="135.5" fill="rgba(0,0,0,0.1)"/><rect x="429.62" y="198" width="1.20" height="135.5" fill="rgba(0,0,0,0.1)"/><rect x="434.84" y="198" width="1.20" height="135.5" fill="rgba(0,0,0,0.1)"/><rect x="440.05" y="198" width="1.20" height="135.5" fill="rgba(0,0,0,0.1)"/><rect x="445.26" y="198" width="1.20" height="135.5" fill="rgba(0,0,0,0.1)"/><rect x="450.47" y="198" width="1.20" height="135.5" fill="rgba(0,0,0,0.1)"/><rect x="455.69" y="198" width="1.20" height="135.5" fill="rgba(0,0,0,0.1)"/><rect x="460.90" y="198" width="1.20" height="135.5" fill="rgba(0,0,0,0.1)"/><rect x="466.11" y="198" width="1.20" height="135.5" fill="rgba(0,0,0,0.1)"/><rect x="471.32" y="198" width="1.20" height="135.5" fill="rgba(0,0,0,0.1)"/><rect x="476.54" y="198" width="1.20" height="135.5" fill="rgba(0,0,0,0.1)"/><rect x="481.75" y="198" width="1.20" height="135.5" fill="rgba(0,0,0,0.1)"/><rect x="486.96" y="198" width="1.20" height="135.5" fill="rgba(0,0,0,0.1)"/><rect x="492.17" y="198" width="1.20" height="135.5" fill="rgba(0,0,0,0.1)"/><rect x="497.39" y="198" width="1.20" height="135.5" fill="rgba(0,0,0,0.1)"/><rect x="502.60" y="198" width="1.20" height="135.5" fill="rgba(0,0,0,0.1)"/><rect x="507.81" y="198" width="1.20" height="135.5" fill="rgba(0,0,0,0.1)"/><rect x="513.02" y="198" width="1.20" height="135.5" fill="rgba(0,0,0,0.1)"/><rect x="518.24" y="198" width="1.20" height="135.5" fill="rgba(0,0,0,0.1)"/><rect x="523.45" y="198" width="1.20" height="135.5" fill="rgba(0,0,0,0.1)"/><rect x="528.66" y="198" width="1.20" height="135.5" fill="rgba(0,0,0,0.1)"/><rect x="533.88" y="198" width="1.20" height="135.5" fill="rgba(0,0,0,0.1)"/><rect x="539.09" y="198" width="1.20" height="135.5" fill="rgba(0,0,0,0.1)"/><rect x="544.30" y="198" width="1.20" height="135.5" fill="rgba(0,0,0,0.1)"/><rect x="549.51" y="198" width="1.20" height="135.5" fill="rgba(0,0,0,0.1)"/><rect x="554.73" y="198" width="1.20" height="135.5" fill="rgba(0,0,0,0.1)"/><rect x="559.94" y="198" width="1.20" height="135.5" fill="rgba(0,0,0,0.1)"/><rect x="565.15" y="198" width="1.20" height="135.5" fill="rgba(0,0,0,0.1)"/><rect x="570.36" y="198" width="1.20" height="135.5" fill="rgba(0,0,0,0.1)"/><rect x="575.57" y="198" width="1.20" height="135.5" fill="rgba(0,0,0,0.1)"/><rect x="580.79" y="198" width="1.20" height="135.5" fill="rgba(0,0,0,0.1)"/><rect x="586.00" y="198" width="1.20" height="135.5" fill="rgba(0,0,0,0.1)"/><rect x="591.21" y="198" width="1.20" height="135.5" fill="rgba(0,0,0,0.1)"/><rect x="596.43" y="198" width="1.20" height="135.5" fill="rgba(0,0,0,0.1)"/><rect x="601.64" y="198" width="1.20" height="135.5" fill="rgba(0,0,0,0.1)"/><rect x="606.85" y="198" width="1.20" height="135.5" fill="rgba(0,0,0,0.1)"/><rect x="612.06" y="198" width="1.20" height="135.5" fill="rgba(0,0,0,0.1)"/><rect x="617.27" y="198" width="1.20" height="135.5" fill="rgba(0,0,0,0.1)"/><rect x="622.49" y="198" width="1.20" height="135.5" fill="rgba(0,0,0,0.1)"/><rect x="627.70" y="198" width="1.20" height="135.5" fill="rgba(0,0,0,0.1)"/><rect x="632.91" y="198" width="1.20" height="135.5" fill="rgba(0,0,0,0.1)"/><rect x="638.12" y="198" width="1.20" height="135.5" fill="rgba(0,0,0,0.1)"/><rect x="643.34" y="198" width="1.20" height="135.5" fill="rgba(0,0,0,0.1)"/><rect x="648.55" y="198" width="1.20" height="135.5" fill="rgba(0,0,0,0.1)"/><rect x="653.76" y="198" width="1.20" height="135.5" fill="rgba(0,0,0,0.1)"/><rect x="658.98" y="198" width="1.20" height="135.5" fill="rgba(0,0,0,0.1)"/><rect x="664.19" y="198" width="1.20" height="135.5" fill="rgba(0,0,0,0.1)"/><rect x="669.40" y="198" width="1.20" height="135.5" fill="rgba(0,0,0,0.1)"/><rect x="674.61" y="198" width="1.20" height="135.5" fill="rgba(0,0,0,0.1)"/><rect x="679.82" y="198" width="1.20" height="135.5" fill="rgba(0,0,0,0.1)"/><rect x="685.04" y="198" width="1.20" height="135.5" fill="rgba(0,0,0,0.1)"/><rect x="690.25" y="198" width="1.20" height="135.5" fill="rgba(0,0,0,0.1)"/><rect x="695.46" y="198" width="1.20" height="135.5" fill="rgba(0,0,0,0.1)"/><rect x="700.68" y="198" width="1.20" height="135.5" fill="rgba(0,0,0,0.1)"/><rect x="705.89" y="198" width="1.20" height="135.5" fill="rgba(0,0,0,0.1)"/><rect x="711.10" y="198" width="1.20" height="135.5" fill="rgba(0,0,0,0.1)"/><rect x="716.31" y="198" width="1.20" height="135.5" fill="rgba(0,0,0,0.1)"/><rect x="721.52" y="198" width="1.20" height="135.5" fill="rgba(0,0,0,0.1)"/><rect x="726.74" y="198" width="1.20" height="135.5" fill="rgba(0,0,0,0.1)"/><rect x="731.95" y="198" width="1.20" height="135.5" fill="rgba(0,0,0,0.1)"/><rect x="737.16" y="198" width="1.20" height="135.5" fill="rgba(0,0,0,0.1)"/><rect x="742.38" y="198" width="1.20" height="135.5" fill="rgba(0,0,0,0.1)"/><rect x="747.59" y="198" width="1.20" height="135.5" fill="rgba(0,0,0,0.1)"/><rect x="752.80" y="198" width="1.20" height="135.5" fill="rgba(0,0,0,0.1)"/><rect x="758.01" y="198" width="1.20" height="135.5" fill="rgba(0,0,0,0.1)"/><rect x="763.23" y="198" width="1.20" height="135.5" fill="rgba(0,0,0,0.1)"/><rect x="768.44" y="198" width="1.20" height="135.5" fill="rgba(0,0,0,0.1)"/><rect x="773.65" y="198" width="1.20" height="135.5" fill="rgba(0,0,0,0.1)"/><rect x="778.86" y="198" width="1.20" height="135.5" fill="rgba(0,0,0,0.1)"/><rect x="784.07" y="198" width="1.20" height="135.5" fill="rgba(0,0,0,0.1)"/><rect x="789.29" y="198" width="1.20" height="135.5" fill="rgba(0,0,0,0.1)"/><rect x="794.50" y="198" width="1.20" height="135.5" fill="rgba(0,0,0,0.1)"/><rect x="461" y="207" width="1.5" height="126" fill="#b89a30" opacity=".8"/><rect x="628.2" y="207" width="1" height="126" fill="#5a4a10" opacity=".7"/><rect x="299" y="207" width="1.5" height="126" fill="#8a6810"/><rect x="299" y="332" width="498" height="1.5" fill="#b8860c"/><rect x="302.64" y="195" width="0.8" height="2.6" fill="#9a9a9a"/><rect x="310.98" y="195" width="0.8" height="2.6" fill="#9a9a9a"/><rect x="319.32" y="195" width="0.8" height="2.6" fill="#9a9a9a"/><rect x="327.66" y="195" width="0.8" height="2.6" fill="#9a9a9a"/><rect x="336.00" y="195" width="0.8" height="2.6" fill="#9a9a9a"/><rect x="344.34" y="195" width="0.8" height="2.6" fill="#9a9a9a"/><rect x="352.68" y="195" width="0.8" height="2.6" fill="#9a9a9a"/><rect x="361.02" y="195" width="0.8" height="2.6" fill="#9a9a9a"/><rect x="369.36" y="195" width="0.8" height="2.6" fill="#9a9a9a"/><rect x="377.70" y="195" width="0.8" height="2.6" fill="#9a9a9a"/><rect x="386.04" y="195" width="0.8" height="2.6" fill="#9a9a9a"/><rect x="394.38" y="195" width="0.8" height="2.6" fill="#9a9a9a"/><rect x="402.72" y="195" width="0.8" height="2.6" fill="#9a9a9a"/><rect x="411.06" y="195" width="0.8" height="2.6" fill="#9a9a9a"/><rect x="419.40" y="195" width="0.8" height="2.6" fill="#9a9a9a"/><rect x="427.74" y="195" width="0.8" height="2.6" fill="#9a9a9a"/><rect x="436.08" y="195" width="0.8" height="2.6" fill="#9a9a9a"/><rect x="444.42" y="195" width="0.8" height="2.6" fill="#9a9a9a"/><rect x="452.76" y="195" width="0.8" height="2.6" fill="#9a9a9a"/><rect x="461.10" y="195" width="0.8" height="2.6" fill="#9a9a9a"/><rect x="469.44" y="195" width="0.8" height="2.6" fill="#9a9a9a"/><rect x="477.78" y="195" width="0.8" height="2.6" fill="#9a9a9a"/><rect x="486.12" y="195" width="0.8" height="2.6" fill="#9a9a9a"/><rect x="494.46" y="195" width="0.8" height="2.6" fill="#9a9a9a"/><rect x="502.80" y="195" width="0.8" height="2.6" fill="#9a9a9a"/><rect x="511.14" y="195" width="0.8" height="2.6" fill="#9a9a9a"/><rect x="519.48" y="195" width="0.8" height="2.6" fill="#9a9a9a"/><rect x="527.82" y="195" width="0.8" height="2.6" fill="#9a9a9a"/><rect x="536.16" y="195" width="0.8" height="2.6" fill="#9a9a9a"/><rect x="544.50" y="195" width="0.8" height="2.6" fill="#9a9a9a"/><rect x="552.84" y="195" width="0.8" height="2.6" fill="#9a9a9a"/><rect x="561.18" y="195" width="0.8" height="2.6" fill="#9a9a9a"/><rect x="569.52" y="195" width="0.8" height="2.6" fill="#9a9a9a"/><rect x="577.86" y="195" width="0.8" height="2.6" fill="#9a9a9a"/><rect x="586.20" y="195" width="0.8" height="2.6" fill="#9a9a9a"/><rect x="594.54" y="195" width="0.8" height="2.6" fill="#9a9a9a"/><rect x="602.88" y="195" width="0.8" height="2.6" fill="#9a9a9a"/><rect x="611.22" y="195" width="0.8" height="2.6" fill="#9a9a9a"/><rect x="619.56" y="195" width="0.8" height="2.6" fill="#9a9a9a"/><rect x="627.90" y="195" width="0.8" height="2.6" fill="#9a9a9a"/><rect x="636.24" y="195" width="0.8" height="2.6" fill="#9a9a9a"/><rect x="644.58" y="195" width="0.8" height="2.6" fill="#9a9a9a"/><rect x="652.92" y="195" width="0.8" height="2.6" fill="#9a9a9a"/><rect x="661.26" y="195" width="0.8" height="2.6" fill="#9a9a9a"/><rect x="669.60" y="195" width="0.8" height="2.6" fill="#9a9a9a"/><rect x="677.94" y="195" width="0.8" height="2.6" fill="#9a9a9a"/><rect x="686.28" y="195" width="0.8" height="2.6" fill="#9a9a9a"/><rect x="694.62" y="195" width="0.8" height="2.6" fill="#9a9a9a"/><rect x="702.96" y="195" width="0.8" height="2.6" fill="#9a9a9a"/><rect x="711.30" y="195" width="0.8" height="2.6" fill="#9a9a9a"/><rect x="719.64" y="195" width="0.8" height="2.6" fill="#9a9a9a"/><rect x="727.98" y="195" width="0.8" height="2.6" fill="#9a9a9a"/><rect x="736.32" y="195" width="0.8" height="2.6" fill="#9a9a9a"/><rect x="744.66" y="195" width="0.8" height="2.6" fill="#9a9a9a"/><rect x="753.00" y="195" width="0.8" height="2.6" fill="#9a9a9a"/><rect x="761.34" y="195" width="0.8" height="2.6" fill="#9a9a9a"/><rect x="769.68" y="195" width="0.8" height="2.6" fill="#9a9a9a"/><rect x="778.02" y="195" width="0.8" height="2.6" fill="#9a9a9a"/><rect x="786.36" y="195" width="0.8" height="2.6" fill="#9a9a9a"/><rect x="306.80" y="199.2" width="8" height="7.5" fill="#686868"/><rect x="316.55" y="199.2" width="8" height="7.5" fill="#686868"/><rect x="326.30" y="199.2" width="8" height="7.5" fill="#686868"/><rect x="336.05" y="199.2" width="8" height="7.5" fill="#686868"/><rect x="345.80" y="199.2" width="8" height="7.5" fill="#686868"/><rect x="355.55" y="199.2" width="8" height="7.5" fill="#686868"/><path d="M300 199.6 A3.6 3.6 0 0 1 300 206.4" stroke="#7a7a7a" stroke-width="1.2" fill="none"/><g fill="none" stroke="#4c4c4c" stroke-width="0.8"><path d="M309.5 202.5 V201.3 A1.3 1.3 0 0 1 312.1 201.3 V202.5"/><rect x="309" y="202.6" width="3.6" height="2.6" fill="#4c4c4c"/><path d="M318.7 205 V201 L320.8 203.3 L322.9 201 V205"/><ellipse cx="330.4" cy="202.6" rx="2.4" ry="1.5" fill="#4c4c4c"/><path d="M340 201 V205.5"/><rect x="348" y="200.8" width="3.6" height="4.4"/><path d="M358 205 L360 202 L362 205"/></g><polygon points="372,207 379,207 376.5,211" fill="#3c3c3c"/><rect x="299" y="271.6" width="498" height="1.1" fill="#7e2614"/><rect x="457" y="337" width="340" height="137" fill="#06ccfc"/><rect x="460" y="340" width="333" height="8" fill="#3c3c3c"/><rect x="460" y="348" width="333" height="123.5" fill="#c6b440"/><path d="M462.5 376.0 L463.0 371.8 L463.5 373.7 L464.0 370.1 L464.5 369.5 L465.0 367.9 L465.5 368.9 L466.0 364.7 L466.5 365.9 L467.0 362.0 L467.5 361.4 L468.0 365.1 L468.5 364.4 L469.0 354.0 L469.5 352.0 L470.0 350.0 L470.5 352.0 L471.0 354.0 L471.5 367.9 L472.0 365.7 L472.5 364.0 L473.0 368.3 L473.5 369.2 L474.0 370.4 L474.5 364.8 L475.0 366.7 L475.5 365.0 L476.0 369.7 L476.5 367.9 L477.0 371.3 L477.5 367.7 L478.0 362.8 L478.5 367.8 L479.0 368.4 L479.5 369.9 L480.0 367.7 L480.5 370.5 L481.0 371.3 L481.5 370.6 L482.0 367.9 L482.5 367.9 L483.0 369.9 L483.5 371.8 L484.0 368.8 L484.5 369.0 L485.0 371.0 L485.5 373.1 L486.0 371.2 L486.5 369.8 L487.0 372.1 L487.5 370.8 L488.0 369.5 L488.5 366.0 L489.0 373.0 L489.5 372.0 L490.0 370.0 L490.5 368.0 L491.0 366.0 L491.5 368.0 L492.0 370.0 L492.5 372.6 L493.0 374.1 L493.5 370.7 L494.0 373.3 L494.5 372.4 L495.0 374.1 L495.5 374.4 L496.0 372.0 L496.5 373.3 L497.0 373.4 L497.5 373.1 L498.0 373.5 L498.5 372.1 L499.0 374.7 L499.5 372.6 L500.0 373.2 L500.5 372.8 L501.0 370.1 L501.5 375.0 L502.0 372.6 L502.5 373.2 L503.0 371.1 L503.5 373.9 L504.0 374.9 L504.5 374.6 L505.0 375.5 L505.5 373.7 L506.0 374.0 L506.5 373.5 L507.0 373.5 L507.5 375.4 L508.0 375.2 L508.5 375.3 L509.0 374.6 L509.5 374.9 L510.0 375.4 L510.5 375.0 L511.0 374.3 L511.5 374.3 L512.0 375.2 L512.5 374.8 L513.0 375.9 L513.5 374.6 L514.0 375.8 L514.5 376.3 L515.0 373.8 L515.5 375.6 L516.0 374.7 L516.5 376.1 L517.0 374.9 L517.5 375.2 L518.0 375.5 L518.5 374.9 L519.0 375.8 L519.5 375.8 L520.0 376.5 L520.5 375.2 L521.0 375.8 L521.5 375.3 L522.0 375.6 L522.5 376.5 L523.0 376.1 L523.5 376.5 L524.0 376.5 L524.5 376.9 L525.0 376.8 L525.5 375.8 L526.0 376.5 L526.5 376.9 L527.0 376.0 L527.5 376.4 L528.0 376.2 L528.5 375.3 L529.0 376.3 L529.5 376.2 L530.0 376.4 L530.5 376.1 L531.0 377.3 L531.5 376.7 L532.0 376.5 L532.5 376.2 L533.0 376.4 L533.5 376.5 L534.0 377.4 L534.5 376.6 L535.0 377.1 L535.5 377.3 L536.0 377.1 L536.5 377.6 L537.0 377.1 L537.5 376.4 L538.0 376.8 L538.5 377.1 L539.0 376.5 L539.5 377.4 L540.0 377.0 L540.5 376.9 L541.0 376.7 L541.5 376.9 L542.0 377.1 L542.5 377.7 L543.0 377.7 L543.5 376.8 L544.0 376.9 L544.5 376.9 L545.0 377.7 L545.5 377.0 L546.0 377.1 L546.5 377.5 L547.0 377.6 L547.5 377.3 L548.0 377.3 L548.5 377.3 L549.0 377.4 L549.5 377.2 L550.0 377.9 L550.5 377.5 L551.0 377.8 L551.5 377.5 L552.0 377.8 L552.5 377.5 L553.0 377.9 L553.5 378.0 L554.0 378.0 L554.5 377.6 L555.0 377.8 L555.5 377.5 L556.0 377.7 L556.5 377.9 L557.0 377.6 L557.5 378.0 L558.0 377.8 L558.5 377.5 L559.0 377.7 L559.5 377.5 L560.0 377.6 L560.5 378.0 L561.0 377.7 L561.5 378.2 L562.0 378.0 L562.5 378.1 L563.0 378.1 L563.5 377.6 L564.0 378.0 L564.5 378.0 L565.0 377.7 L565.5 377.8 L566.0 377.5 L566.5 377.8 L567.0 377.7 L567.5 377.7 L568.0 378.2 L568.5 377.7 L569.0 378.0 L569.5 378.2 L570.0 378.0 L570.5 378.2 L571.0 377.8 L571.5 377.9 L572.0 378.3 L572.5 378.1 L573.0 377.9 L573.5 378.2 L574.0 378.0 L574.5 378.1 L575.0 378.0 L575.5 378.2 L576.0 378.1 L576.5 378.2 L577.0 378.0 L577.5 378.3 L578.0 378.4 L578.5 378.2 L579.0 378.1 L579.5 378.4 L580.0 378.2 L580.5 378.4 L581.0 378.2 L581.5 378.1 L582.0 378.1 L582.5 378.3 L583.0 378.4 L583.5 378.3 L584.0 378.1 L584.5 378.3 L585.0 378.4 L585.5 378.2 L586.0 378.3 L586.5 378.3 L587.0 378.1 L587.5 378.4 L588.0 377.8 L588.5 378.2 L589.0 378.2 L589.5 378.5 L590.0 378.4 L590.5 378.2 L591.0 378.4 L591.5 378.4 L592.0 378.4 L592.5 378.4 L593.0 378.2 L593.5 378.0 L594.0 378.4 L594.5 378.4 L595.0 378.3 L595.5 378.4 L596.0 378.4 L596.5 378.4 L597.0 378.5 L597.5 378.4 L598.0 378.3 L598.5 378.3 L599.0 378.5 L599.5 378.5 L600.0 378.3 L600.5 378.4 L601.0 378.5 L601.5 378.5 L602.0 378.5 L602.5 378.3 L603.0 378.4 L603.5 378.4 L604.0 378.5 L604.5 378.5 L605.0 378.3 L605.5 378.5 L606.0 378.5 L606.5 378.4 L607.0 378.5 L607.5 378.5 L608.0 378.4 L608.5 378.5 L609.0 378.4 L609.5 378.5 L610.0 378.5 L610.5 378.5 L611.0 378.5 L611.5 378.5 L612.0 378.5 L612.5 378.5 L613.0 378.5 L613.5 378.5 L614.0 378.5 L614.5 378.5 L615.0 378.5 L615.5 378.5 L616.0 378.5 L616.5 378.5 L617.0 378.3 L617.5 378.5 L618.0 378.5 L618.5 378.5 L619.0 378.5 L619.5 378.4 L620.0 378.5 L620.5 378.5 L621.0 378.5 L621.5 378.5 L622.0 378.5 L622.5 378.5 L623.0 378.5 L623.5 378.5 L624.0 378.5 L624.5 378.5 L625.0 378.5 L625.5 378.5 L626.0 378.5 L626.5 378.5 L627.0 378.5 L627.5 378.5 L628.0 378.5 L628.5 378.5 L629.0 378.5 L629.5 378.5 L630.0 378.5 L630.5 378.5 L631.0 378.5 L631.5 378.5 L632.0 378.5 L632.5 378.5 L633.0 378.5 L633.5 378.5 L634.0 378.5 L634.5 378.5 L635.0 378.5 L635.5 378.5 L636.0 378.5 L636.5 378.5 L637.0 378.5 L637.5 378.5 L638.0 378.5 L638.5 378.5 L639.0 378.5 L639.5 378.5 L640.0 378.5 L640.5 378.5 L641.0 378.5 L641.5 378.5 L642.0 378.4 L642.5 378.5 L643.0 378.5 L643.5 378.5 L644.0 378.5 L644.5 378.5 L645.0 378.5 L645.5 378.5 L646.0 378.5 L646.5 378.5 L647.0 378.5 L647.5 378.5 L648.0 378.5 L648.5 378.5 L649.0 378.5 L649.5 378.5 L650.0 378.5 L650.5 378.5 L651.0 378.5 L651.5 378.5 L652.0 378.5 L652.5 378.5 L653.0 378.5 L653.5 378.5 L654.0 378.5 L654.5 378.5 L655.0 378.5 L655.5 378.5 L656.0 378.5 L656.5 378.5 L657.0 378.5 L657.5 378.5 L658.0 378.5 L658.5 378.5 L659.0 378.5 L659.5 378.5 L660.0 378.5 L660.5 378.5 L661.0 378.5 L661.5 378.5 L662.0 378.5 L662.5 378.5 L663.0 378.5 L663.5 378.5 L664.0 378.5 L664.5 378.5 L665.0 378.5 L665.5 378.5 L666.0 378.5 L666.5 378.5 L667.0 378.5 L667.5 378.5 L668.0 378.5 L668.5 378.5 L669.0 378.5 L669.5 378.5 L670.0 378.5 L670.5 378.5 L671.0 378.5 L671.5 378.5 L672.0 378.5 L672.5 378.5 L673.0 378.5 L673.5 378.5 L674.0 378.5 L674.5 378.5 L675.0 378.5 L675.5 378.5 L676.0 378.5 L676.5 378.5 L677.0 378.5 L677.5 378.5 L678.0 378.5 L678.5 378.5 L679.0 378.5 L679.5 378.5 L680.0 378.5 L680.5 378.5 L681.0 378.5 L681.5 378.5 L682.0 378.5 L682.5 378.5 L683.0 378.5 L683.5 378.5 L684.0 378.5 L684.5 378.5 L685.0 378.5 L685.5 378.5 L686.0 378.5 L686.5 378.5 L687.0 378.5 L687.5 378.5 L688.0 378.5 L688.5 378.5 L689.0 378.5 L689.5 378.5 L690.0 378.5 L690.5 378.5 L691.0 378.5 L691.5 378.5 L692.0 378.5 L692.5 378.5 L693.0 378.5 L693.5 378.5 L694.0 378.5 L694.5 378.5 L695.0 378.5 L695.5 378.5 L696.0 378.5 L696.5 378.5 L697.0 378.5 L697.5 378.5 L698.0 378.5 L698.5 378.5 L699.0 378.5 L699.5 378.5 L700.0 378.5 L700.5 378.5 L701.0 378.5 L701.5 378.5 L702.0 378.5 L702.5 378.5 L703.0 378.5 L703.5 378.5 L704.0 378.5 L704.5 378.5 L705.0 378.5 L705.5 378.5 L706.0 378.5 L706.5 378.5 L707.0 378.5 L707.5 378.5 L708.0 378.5 L708.5 378.5 L709.0 378.5 L709.5 378.5 L710.0 378.5 L710.5 378.5 L711.0 378.5 L711.5 378.5 L712.0 378.5 L712.5 378.5 L713.0 378.5 L713.5 378.5 L714.0 378.5 L714.5 378.5 L715.0 378.5 L715.5 378.5 L716.0 378.5 L716.5 378.5 L717.0 378.5 L717.5 378.5 L718.0 378.5 L718.5 378.5 L719.0 378.5 L719.5 378.5 L720.0 378.5 L720.5 378.5 L721.0 378.5 L721.5 378.5 L722.0 378.5 L722.5 378.5 L723.0 378.5 L723.5 378.5 L724.0 378.5 L724.5 378.5 L725.0 378.5 L725.5 378.5 L726.0 378.5 L726.5 378.5 L727.0 378.5 L727.5 378.5 L728.0 378.5 L728.5 378.5 L729.0 378.5 L729.5 378.5 L730.0 378.5 L730.5 378.5 L731.0 378.5 L731.5 378.5 L732.0 378.5 L732.5 378.5 L733.0 378.5 L733.5 378.5 L734.0 378.5 L734.5 378.5 L735.0 378.5 L735.5 378.5 L736.0 378.5 L736.5 378.5 L737.0 378.5 L737.5 378.5 L738.0 378.5 L738.5 378.5 L739.0 378.5 L739.5 378.5 L740.0 378.5 L740.5 378.5 L741.0 378.5 L741.5 378.5 L742.0 378.5 L742.5 378.5 L743.0 378.5 L743.5 378.5 L744.0 378.5 L744.5 378.5 L745.0 378.5 L745.5 378.5 L746.0 378.5 L746.5 378.5 L747.0 378.5 L747.5 378.5 L748.0 378.5 L748.5 378.5 L749.0 378.5 L749.5 378.5 L750.0 378.5 L750.5 378.5 L751.0 378.5 L751.5 378.5 L752.0 378.5 L752.5 378.5 L753.0 378.5 L753.5 378.5 L754.0 378.5 L754.5 378.5 L755.0 378.5 L755.5 378.5 L756.0 378.5 L756.5 378.5 L757.0 378.5 L757.5 378.5 L758.0 378.5 L758.5 378.5 L759.0 378.5 L759.5 378.5 L760.0 378.5 L760.5 378.5 L761.0 378.5 L761.5 378.5 L762.0 378.5 L762.5 378.5 L763.0 378.5 L763.5 378.5 L764.0 378.5 L764.5 378.5 L765.0 378.5 L765.5 378.5 L766.0 378.5 L766.5 378.5 L767.0 378.5 L767.5 378.5 L768.0 378.5 L768.5 378.5 L769.0 378.5 L769.5 378.5 L770.0 378.5 L770.5 378.5 L771.0 378.5 L771.5 378.5 L772.0 378.5 L772.5 378.5 L773.0 378.5 L773.5 378.5 L774.0 378.5 L774.5 378.5 L775.0 378.5 L775.5 378.5 L776.0 378.5 L776.5 378.5 L777.0 378.5 L777.5 378.5 L778.0 378.5 L778.5 378.5 L779.0 378.5 L779.5 378.5 L780.0 378.5 L780.5 378.5 L781.0 378.5 L781.5 378.5 L782.0 378.5 L782.5 378.5 L783.0 378.5 L783.5 378.5 L784.0 378.5 L784.5 378.5 L785.0 378.5 L785.5 378.5 L786.0 378.5 L786.5 378.5 L787.0 378.5 L787.5 378.5 L788.0 378.5 L788.5 378.5 L789.0 378.5 L789.5 378.5 L790.0 378.5 L790.5 378.5 L791.0 378.5 L791.5 378.5 L792.0 378.5 L792.5 378.5 L793.0 378.5 L793.0 379.5 L792.5 379.5 L792.0 379.5 L791.5 379.5 L791.0 379.5 L790.5 379.5 L790.0 379.5 L789.5 379.5 L789.0 379.5 L788.5 379.5 L788.0 379.5 L787.5 379.5 L787.0 379.5 L786.5 379.5 L786.0 379.5 L785.5 379.5 L785.0 379.5 L784.5 379.5 L784.0 379.5 L783.5 379.5 L783.0 379.5 L782.5 379.5 L782.0 379.5 L781.5 379.5 L781.0 379.5 L780.5 379.5 L780.0 379.5 L779.5 379.5 L779.0 379.5 L778.5 379.5 L778.0 379.5 L777.5 379.5 L777.0 379.5 L776.5 379.5 L776.0 379.5 L775.5 379.5 L775.0 379.5 L774.5 379.5 L774.0 379.5 L773.5 379.5 L773.0 379.5 L772.5 379.5 L772.0 379.5 L771.5 379.5 L771.0 379.5 L770.5 379.5 L770.0 379.5 L769.5 379.5 L769.0 379.5 L768.5 379.5 L768.0 379.5 L767.5 379.5 L767.0 379.5 L766.5 379.5 L766.0 379.5 L765.5 379.5 L765.0 379.5 L764.5 379.5 L764.0 379.5 L763.5 379.5 L763.0 379.5 L762.5 379.5 L762.0 379.5 L761.5 379.5 L761.0 379.5 L760.5 379.5 L760.0 379.5 L759.5 379.5 L759.0 379.5 L758.5 379.5 L758.0 379.5 L757.5 379.5 L757.0 379.5 L756.5 379.5 L756.0 379.5 L755.5 379.5 L755.0 379.5 L754.5 379.5 L754.0 379.5 L753.5 379.5 L753.0 379.5 L752.5 379.5 L752.0 379.5 L751.5 379.5 L751.0 379.5 L750.5 379.5 L750.0 379.5 L749.5 379.5 L749.0 379.5 L748.5 379.5 L748.0 379.5 L747.5 379.5 L747.0 379.5 L746.5 379.5 L746.0 379.5 L745.5 379.5 L745.0 379.5 L744.5 379.5 L744.0 379.5 L743.5 379.5 L743.0 379.5 L742.5 379.5 L742.0 379.5 L741.5 379.5 L741.0 379.5 L740.5 379.5 L740.0 379.5 L739.5 379.5 L739.0 379.5 L738.5 379.5 L738.0 379.5 L737.5 379.5 L737.0 379.5 L736.5 379.5 L736.0 379.5 L735.5 379.5 L735.0 379.5 L734.5 379.5 L734.0 379.5 L733.5 379.5 L733.0 379.5 L732.5 379.5 L732.0 379.5 L731.5 379.5 L731.0 379.5 L730.5 379.5 L730.0 379.5 L729.5 379.5 L729.0 379.5 L728.5 379.5 L728.0 379.5 L727.5 379.5 L727.0 379.5 L726.5 379.5 L726.0 379.5 L725.5 379.5 L725.0 379.5 L724.5 379.5 L724.0 379.5 L723.5 379.5 L723.0 379.5 L722.5 379.5 L722.0 379.5 L721.5 379.5 L721.0 379.5 L720.5 379.5 L720.0 379.5 L719.5 379.5 L719.0 379.5 L718.5 379.5 L718.0 379.5 L717.5 379.5 L717.0 379.5 L716.5 379.5 L716.0 379.5 L715.5 379.5 L715.0 379.5 L714.5 379.5 L714.0 379.5 L713.5 379.5 L713.0 379.5 L712.5 379.5 L712.0 379.5 L711.5 379.5 L711.0 379.5 L710.5 379.5 L710.0 379.5 L709.5 379.5 L709.0 379.5 L708.5 379.5 L708.0 379.5 L707.5 379.5 L707.0 379.5 L706.5 379.5 L706.0 379.5 L705.5 379.5 L705.0 379.5 L704.5 379.5 L704.0 379.5 L703.5 379.5 L703.0 379.5 L702.5 379.5 L702.0 379.5 L701.5 379.5 L701.0 379.5 L700.5 379.5 L700.0 379.5 L699.5 379.5 L699.0 379.5 L698.5 379.5 L698.0 379.5 L697.5 379.5 L697.0 379.5 L696.5 379.5 L696.0 379.5 L695.5 379.5 L695.0 379.5 L694.5 379.5 L694.0 379.5 L693.5 379.5 L693.0 379.5 L692.5 379.5 L692.0 379.5 L691.5 379.5 L691.0 379.5 L690.5 379.5 L690.0 379.5 L689.5 379.5 L689.0 379.5 L688.5 379.5 L688.0 379.5 L687.5 379.5 L687.0 379.5 L686.5 379.5 L686.0 379.5 L685.5 379.5 L685.0 379.5 L684.5 379.5 L684.0 379.5 L683.5 379.5 L683.0 379.5 L682.5 379.5 L682.0 379.5 L681.5 379.5 L681.0 379.5 L680.5 379.5 L680.0 379.5 L679.5 379.5 L679.0 379.5 L678.5 379.5 L678.0 379.5 L677.5 379.5 L677.0 379.5 L676.5 379.5 L676.0 379.5 L675.5 379.5 L675.0 379.5 L674.5 379.5 L674.0 379.5 L673.5 379.5 L673.0 379.5 L672.5 379.5 L672.0 379.5 L671.5 379.5 L671.0 379.5 L670.5 379.5 L670.0 379.5 L669.5 379.5 L669.0 379.5 L668.5 379.5 L668.0 379.5 L667.5 379.5 L667.0 379.5 L666.5 379.5 L666.0 379.5 L665.5 379.5 L665.0 379.5 L664.5 379.5 L664.0 379.5 L663.5 379.5 L663.0 379.5 L662.5 379.5 L662.0 379.5 L661.5 379.5 L661.0 379.5 L660.5 379.5 L660.0 379.5 L659.5 379.5 L659.0 379.5 L658.5 379.5 L658.0 379.5 L657.5 379.5 L657.0 379.5 L656.5 379.5 L656.0 379.5 L655.5 379.5 L655.0 379.5 L654.5 379.5 L654.0 379.5 L653.5 379.5 L653.0 379.5 L652.5 379.5 L652.0 379.5 L651.5 379.5 L651.0 379.5 L650.5 379.5 L650.0 379.5 L649.5 379.5 L649.0 379.5 L648.5 379.5 L648.0 379.5 L647.5 379.5 L647.0 379.5 L646.5 379.5 L646.0 379.5 L645.5 379.5 L645.0 379.5 L644.5 379.5 L644.0 379.5 L643.5 379.5 L643.0 379.5 L642.5 379.5 L642.0 379.5 L641.5 379.5 L641.0 379.5 L640.5 379.5 L640.0 379.5 L639.5 379.5 L639.0 379.5 L638.5 379.5 L638.0 379.5 L637.5 379.5 L637.0 379.5 L636.5 379.5 L636.0 379.5 L635.5 379.5 L635.0 379.5 L634.5 379.5 L634.0 379.5 L633.5 379.5 L633.0 379.5 L632.5 379.5 L632.0 379.5 L631.5 379.5 L631.0 379.5 L630.5 379.5 L630.0 379.5 L629.5 379.5 L629.0 379.5 L628.5 379.5 L628.0 379.5 L627.5 379.5 L627.0 379.5 L626.5 379.5 L626.0 379.6 L625.5 379.5 L625.0 379.5 L624.5 379.5 L624.0 379.5 L623.5 379.5 L623.0 379.5 L622.5 379.5 L622.0 379.5 L621.5 379.5 L621.0 379.5 L620.5 379.5 L620.0 379.5 L619.5 379.5 L619.0 379.5 L618.5 379.5 L618.0 379.5 L617.5 379.5 L617.0 379.5 L616.5 379.5 L616.0 379.5 L615.5 379.6 L615.0 379.6 L614.5 379.5 L614.0 379.5 L613.5 379.6 L613.0 379.5 L612.5 379.5 L612.0 379.5 L611.5 379.5 L611.0 379.5 L610.5 379.5 L610.0 379.5 L609.5 379.5 L609.0 379.5 L608.5 379.5 L608.0 379.5 L607.5 379.6 L607.0 379.5 L606.5 379.8 L606.0 379.5 L605.5 379.7 L605.0 379.6 L604.5 379.7 L604.0 379.6 L603.5 379.6 L603.0 379.7 L602.5 379.7 L602.0 379.5 L601.5 379.6 L601.0 379.5 L600.5 379.6 L600.0 379.5 L599.5 379.6 L599.0 379.5 L598.5 379.6 L598.0 379.6 L597.5 379.7 L597.0 379.5 L596.5 379.5 L596.0 379.5 L595.5 379.6 L595.0 379.6 L594.5 379.8 L594.0 379.8 L593.5 379.8 L593.0 379.7 L592.5 379.8 L592.0 379.9 L591.5 379.8 L591.0 379.9 L590.5 379.9 L590.0 379.6 L589.5 379.7 L589.0 379.5 L588.5 379.9 L588.0 379.6 L587.5 379.5 L587.0 379.9 L586.5 379.9 L586.0 379.8 L585.5 379.8 L585.0 379.5 L584.5 380.0 L584.0 380.0 L583.5 380.0 L583.0 379.6 L582.5 379.6 L582.0 379.6 L581.5 379.7 L581.0 380.2 L580.5 380.0 L580.0 379.6 L579.5 379.7 L579.0 379.6 L578.5 380.0 L578.0 379.7 L577.5 379.7 L577.0 380.1 L576.5 380.1 L576.0 379.7 L575.5 379.9 L575.0 380.1 L574.5 379.9 L574.0 380.6 L573.5 379.9 L573.0 379.9 L572.5 379.9 L572.0 379.8 L571.5 380.0 L571.0 380.0 L570.5 379.7 L570.0 380.2 L569.5 379.8 L569.0 380.1 L568.5 379.9 L568.0 379.9 L567.5 380.0 L567.0 380.1 L566.5 380.1 L566.0 379.9 L565.5 379.8 L565.0 380.3 L564.5 380.4 L564.0 380.1 L563.5 380.4 L563.0 380.3 L562.5 380.0 L562.0 380.3 L561.5 380.4 L561.0 380.1 L560.5 380.5 L560.0 380.2 L559.5 380.5 L559.0 380.6 L558.5 380.4 L558.0 380.0 L557.5 380.2 L557.0 380.3 L556.5 380.3 L556.0 380.3 L555.5 380.4 L555.0 380.5 L554.5 380.5 L554.0 380.4 L553.5 380.8 L553.0 380.1 L552.5 380.7 L552.0 380.5 L551.5 380.1 L551.0 380.1 L550.5 380.2 L550.0 380.5 L549.5 380.8 L549.0 380.9 L548.5 380.2 L548.0 380.2 L547.5 380.5 L547.0 380.3 L546.5 380.4 L546.0 380.7 L545.5 380.4 L545.0 380.6 L544.5 380.3 L544.0 380.3 L543.5 380.8 L543.0 381.0 L542.5 380.9 L542.0 382.2 L541.5 381.0 L541.0 380.7 L540.5 380.7 L540.0 381.4 L539.5 380.5 L539.0 380.9 L538.5 381.6 L538.0 381.7 L537.5 380.7 L537.0 380.7 L536.5 380.8 L536.0 381.2 L535.5 381.7 L535.0 381.2 L534.5 381.3 L534.0 380.9 L533.5 382.1 L533.0 381.9 L532.5 381.6 L532.0 380.9 L531.5 382.0 L531.0 381.2 L530.5 380.9 L530.0 381.4 L529.5 381.6 L529.0 381.6 L528.5 381.9 L528.0 381.3 L527.5 381.8 L527.0 382.3 L526.5 382.2 L526.0 381.3 L525.5 382.2 L525.0 381.3 L524.5 381.2 L524.0 382.5 L523.5 381.8 L523.0 381.6 L522.5 382.8 L522.0 382.2 L521.5 381.5 L521.0 382.3 L520.5 381.5 L520.0 383.0 L519.5 381.7 L519.0 382.1 L518.5 382.7 L518.0 383.0 L517.5 383.0 L517.0 381.7 L516.5 382.9 L516.0 382.4 L515.5 382.6 L515.0 383.1 L514.5 383.5 L514.0 382.7 L513.5 383.8 L513.0 382.4 L512.5 384.1 L512.0 382.4 L511.5 382.9 L511.0 383.3 L510.5 383.5 L510.0 384.0 L509.5 383.0 L509.0 384.1 L508.5 384.0 L508.0 382.8 L507.5 383.0 L507.0 383.7 L506.5 382.8 L506.0 383.8 L505.5 382.9 L505.0 383.9 L504.5 383.7 L504.0 384.4 L503.5 385.1 L503.0 385.5 L502.5 384.3 L502.0 386.6 L501.5 385.5 L501.0 383.5 L500.5 383.1 L500.0 385.0 L499.5 385.3 L499.0 385.9 L498.5 385.9 L498.0 386.4 L497.5 385.8 L497.0 385.9 L496.5 384.8 L496.0 384.9 L495.5 384.3 L495.0 385.8 L494.5 385.1 L494.0 385.0 L493.5 387.3 L493.0 386.4 L492.5 388.4 L492.0 385.2 L491.5 384.2 L491.0 387.6 L490.5 385.2 L490.0 388.2 L489.5 388.7 L489.0 385.9 L488.5 387.3 L488.0 388.0 L487.5 388.7 L487.0 389.2 L486.5 389.1 L486.0 389.8 L485.5 390.0 L485.0 387.4 L484.5 386.8 L484.0 387.3 L483.5 387.1 L483.0 386.7 L482.5 388.3 L482.0 386.8 L481.5 387.9 L481.0 388.6 L480.5 387.5 L480.0 386.5 L479.5 390.0 L479.0 388.5 L478.5 392.7 L478.0 395.8 L477.5 389.9 L477.0 395.2 L476.5 387.2 L476.0 389.3 L475.5 390.9 L475.0 391.7 L474.5 390.3 L474.0 394.0 L473.5 390.9 L473.0 392.0 L472.5 395.6 L472.0 388.7 L471.5 399.8 L471.0 394.9 L470.5 389.3 L470.0 390.6 L469.5 397.0 L469.0 397.5 L468.5 397.1 L468.0 392.7 L467.5 393.1 L467.0 390.2 L466.5 396.2 L466.0 395.4 L465.5 387.8 L465.0 387.0 L464.5 390.2 L464.0 386.8 L463.5 384.5 L463.0 382.8 L462.5 382.8Z" fill="#44bde0"/><path d="M462.5 438.2 L463.0 437.6 L463.5 434.3 L464.0 435.3 L464.5 431.1 L465.0 432.5 L465.5 427.8 L466.0 428.9 L466.5 424.6 L467.0 424.8 L467.5 427.8 L468.0 418.0 L468.5 416.0 L469.0 414.0 L469.5 416.0 L470.0 418.0 L470.5 419.7 L471.0 427.0 L471.5 427.4 L472.0 426.5 L472.5 432.7 L473.0 430.2 L473.5 431.1 L474.0 430.7 L474.5 433.0 L475.0 431.6 L475.5 428.7 L476.0 424.9 L476.5 432.3 L477.0 429.3 L477.5 429.2 L478.0 432.6 L478.5 434.0 L479.0 433.0 L479.5 429.3 L480.0 429.7 L480.5 432.0 L481.0 430.0 L481.5 430.7 L482.0 431.6 L482.5 430.2 L483.0 431.8 L483.5 426.3 L484.0 432.2 L484.5 434.3 L485.0 431.4 L485.5 431.5 L486.0 432.6 L486.5 430.6 L487.0 433.1 L487.5 435.2 L488.0 435.8 L488.5 433.7 L489.0 433.0 L489.5 431.0 L490.0 429.0 L490.5 431.0 L491.0 433.0 L491.5 435.7 L492.0 434.4 L492.5 435.4 L493.0 434.8 L493.5 435.4 L494.0 434.3 L494.5 435.1 L495.0 434.1 L495.5 434.3 L496.0 436.7 L496.5 434.1 L497.0 435.1 L497.5 436.5 L498.0 437.1 L498.5 434.8 L499.0 435.5 L499.5 435.1 L500.0 435.4 L500.5 436.6 L501.0 434.9 L501.5 436.6 L502.0 436.5 L502.5 436.5 L503.0 435.8 L503.5 434.1 L504.0 435.2 L504.5 437.6 L505.0 435.6 L505.5 437.2 L506.0 436.3 L506.5 436.7 L507.0 435.8 L507.5 437.4 L508.0 436.6 L508.5 436.9 L509.0 437.1 L509.5 438.1 L510.0 437.4 L510.5 436.1 L511.0 438.3 L511.5 436.6 L512.0 437.4 L512.5 436.4 L513.0 437.7 L513.5 438.3 L514.0 437.3 L514.5 437.4 L515.0 438.0 L515.5 437.1 L516.0 437.5 L516.5 436.9 L517.0 437.8 L517.5 438.4 L518.0 437.6 L518.5 438.0 L519.0 437.8 L519.5 438.1 L520.0 437.7 L520.5 438.0 L521.0 437.7 L521.5 437.7 L522.0 439.0 L522.5 437.9 L523.0 438.6 L523.5 439.1 L524.0 438.9 L524.5 438.9 L525.0 438.2 L525.5 438.7 L526.0 438.9 L526.5 438.8 L527.0 439.2 L527.5 439.3 L528.0 439.3 L528.5 438.5 L529.0 439.1 L529.5 438.1 L530.0 438.5 L530.5 439.3 L531.0 439.0 L531.5 439.4 L532.0 438.8 L532.5 439.1 L533.0 439.1 L533.5 439.3 L534.0 439.0 L534.5 439.1 L535.0 439.2 L535.5 438.7 L536.0 439.3 L536.5 438.6 L537.0 439.0 L537.5 439.2 L538.0 439.5 L538.5 439.0 L539.0 439.2 L539.5 439.4 L540.0 438.9 L540.5 438.9 L541.0 438.3 L541.5 439.0 L542.0 439.2 L542.5 439.4 L543.0 439.6 L543.5 439.0 L544.0 439.1 L544.5 439.8 L545.0 439.1 L545.5 439.1 L546.0 439.9 L546.5 439.9 L547.0 439.5 L547.5 439.6 L548.0 439.7 L548.5 439.9 L549.0 439.9 L549.5 439.8 L550.0 439.6 L550.5 439.7 L551.0 439.6 L551.5 439.5 L552.0 439.8 L552.5 439.9 L553.0 439.6 L553.5 439.9 L554.0 438.7 L554.5 440.1 L555.0 440.0 L555.5 439.8 L556.0 439.0 L556.5 439.5 L557.0 439.5 L557.5 440.2 L558.0 439.9 L558.5 439.9 L559.0 440.2 L559.5 439.7 L560.0 439.8 L560.5 440.2 L561.0 439.7 L561.5 439.7 L562.0 439.7 L562.5 439.9 L563.0 440.0 L563.5 440.0 L564.0 440.3 L564.5 439.9 L565.0 440.1 L565.5 439.7 L566.0 439.8 L566.5 439.9 L567.0 440.0 L567.5 439.6 L568.0 439.4 L568.5 439.9 L569.0 439.7 L569.5 440.1 L570.0 439.9 L570.5 440.4 L571.0 440.4 L571.5 440.1 L572.0 440.1 L572.5 440.0 L573.0 440.2 L573.5 440.2 L574.0 440.0 L574.5 440.1 L575.0 440.4 L575.5 440.0 L576.0 440.2 L576.5 440.4 L577.0 440.3 L577.5 440.1 L578.0 440.3 L578.5 440.4 L579.0 440.3 L579.5 440.2 L580.0 440.4 L580.5 440.1 L581.0 440.4 L581.5 440.2 L582.0 440.4 L582.5 440.4 L583.0 440.5 L583.5 440.2 L584.0 440.2 L584.5 440.4 L585.0 440.2 L585.5 440.1 L586.0 440.3 L586.5 440.5 L587.0 440.3 L587.5 440.3 L588.0 440.3 L588.5 440.2 L589.0 440.4 L589.5 440.5 L590.0 440.4 L590.5 440.4 L591.0 440.3 L591.5 440.4 L592.0 440.5 L592.5 440.5 L593.0 440.3 L593.5 440.5 L594.0 440.3 L594.5 440.3 L595.0 440.3 L595.5 440.4 L596.0 440.5 L596.5 440.5 L597.0 440.5 L597.5 440.5 L598.0 440.4 L598.5 440.5 L599.0 440.5 L599.5 440.5 L600.0 440.5 L600.5 440.5 L601.0 440.5 L601.5 440.5 L602.0 440.3 L602.5 440.5 L603.0 440.4 L603.5 440.4 L604.0 440.5 L604.5 440.5 L605.0 440.4 L605.5 440.5 L606.0 440.5 L606.5 440.5 L607.0 440.5 L607.5 440.5 L608.0 440.5 L608.5 440.5 L609.0 440.5 L609.5 440.5 L610.0 440.4 L610.5 440.5 L611.0 440.5 L611.5 440.5 L612.0 440.5 L612.5 440.5 L613.0 440.5 L613.5 440.5 L614.0 440.4 L614.5 440.5 L615.0 440.3 L615.5 440.5 L616.0 440.5 L616.5 440.5 L617.0 440.5 L617.5 440.5 L618.0 440.5 L618.5 440.5 L619.0 440.5 L619.5 440.5 L620.0 440.5 L620.5 440.5 L621.0 440.5 L621.5 440.5 L622.0 440.5 L622.5 440.5 L623.0 440.5 L623.5 440.5 L624.0 440.5 L624.5 440.5 L625.0 440.5 L625.5 440.5 L626.0 440.5 L626.5 440.5 L627.0 440.5 L627.5 440.5 L628.0 440.5 L628.5 440.5 L629.0 440.5 L629.5 440.5 L630.0 440.5 L630.5 440.5 L631.0 440.5 L631.5 440.5 L632.0 440.5 L632.5 440.5 L633.0 440.5 L633.5 440.5 L634.0 440.5 L634.5 440.5 L635.0 440.5 L635.5 440.5 L636.0 440.5 L636.5 440.5 L637.0 440.5 L637.5 440.5 L638.0 440.5 L638.5 440.5 L639.0 440.5 L639.5 440.5 L640.0 440.5 L640.5 440.5 L641.0 440.5 L641.5 440.5 L642.0 440.5 L642.5 440.5 L643.0 440.5 L643.5 440.5 L644.0 440.5 L644.5 440.5 L645.0 440.5 L645.5 440.5 L646.0 440.5 L646.5 440.5 L647.0 440.5 L647.5 440.5 L648.0 440.5 L648.5 440.5 L649.0 440.5 L649.5 440.5 L650.0 440.5 L650.5 440.5 L651.0 440.5 L651.5 440.5 L652.0 440.5 L652.5 440.5 L653.0 440.5 L653.5 440.5 L654.0 440.5 L654.5 440.5 L655.0 440.5 L655.5 440.5 L656.0 440.5 L656.5 440.5 L657.0 440.5 L657.5 440.5 L658.0 440.5 L658.5 440.5 L659.0 440.5 L659.5 440.5 L660.0 440.5 L660.5 440.5 L661.0 440.5 L661.5 440.5 L662.0 440.5 L662.5 440.5 L663.0 440.5 L663.5 440.5 L664.0 440.5 L664.5 440.5 L665.0 440.5 L665.5 440.5 L666.0 440.5 L666.5 440.5 L667.0 440.5 L667.5 440.5 L668.0 440.5 L668.5 440.5 L669.0 440.5 L669.5 440.5 L670.0 440.5 L670.5 440.5 L671.0 440.5 L671.5 440.5 L672.0 440.5 L672.5 440.5 L673.0 440.5 L673.5 440.5 L674.0 440.5 L674.5 440.5 L675.0 440.5 L675.5 440.5 L676.0 440.5 L676.5 440.5 L677.0 440.5 L677.5 440.5 L678.0 440.5 L678.5 440.5 L679.0 440.5 L679.5 440.5 L680.0 440.5 L680.5 440.5 L681.0 440.5 L681.5 440.5 L682.0 440.5 L682.5 440.5 L683.0 440.5 L683.5 440.5 L684.0 440.5 L684.5 440.5 L685.0 440.5 L685.5 440.5 L686.0 440.5 L686.5 440.5 L687.0 440.5 L687.5 440.5 L688.0 440.5 L688.5 440.5 L689.0 440.5 L689.5 440.5 L690.0 440.5 L690.5 440.5 L691.0 440.5 L691.5 440.5 L692.0 440.5 L692.5 440.5 L693.0 440.5 L693.5 440.5 L694.0 440.5 L694.5 440.5 L695.0 440.5 L695.5 440.5 L696.0 440.5 L696.5 440.5 L697.0 440.5 L697.5 440.5 L698.0 440.5 L698.5 440.5 L699.0 440.5 L699.5 440.5 L700.0 440.5 L700.5 440.5 L701.0 440.5 L701.5 440.5 L702.0 440.5 L702.5 440.5 L703.0 440.5 L703.5 440.5 L704.0 440.5 L704.5 440.5 L705.0 440.5 L705.5 440.5 L706.0 440.5 L706.5 440.5 L707.0 440.5 L707.5 440.5 L708.0 440.5 L708.5 440.5 L709.0 440.5 L709.5 440.5 L710.0 440.5 L710.5 440.5 L711.0 440.5 L711.5 440.5 L712.0 440.5 L712.5 440.5 L713.0 440.5 L713.5 440.5 L714.0 440.5 L714.5 440.5 L715.0 440.5 L715.5 440.5 L716.0 440.5 L716.5 440.5 L717.0 440.5 L717.5 440.5 L718.0 440.5 L718.5 440.5 L719.0 440.5 L719.5 440.5 L720.0 440.5 L720.5 440.5 L721.0 440.5 L721.5 440.5 L722.0 440.5 L722.5 440.5 L723.0 440.5 L723.5 440.5 L724.0 440.5 L724.5 440.5 L725.0 440.5 L725.5 440.5 L726.0 440.5 L726.5 440.5 L727.0 440.5 L727.5 440.5 L728.0 440.5 L728.5 440.5 L729.0 440.5 L729.5 440.5 L730.0 440.5 L730.5 440.5 L731.0 440.5 L731.5 440.5 L732.0 440.5 L732.5 440.5 L733.0 440.5 L733.5 440.5 L734.0 440.5 L734.5 440.5 L735.0 440.5 L735.5 440.5 L736.0 440.5 L736.5 440.5 L737.0 440.5 L737.5 440.5 L738.0 440.5 L738.5 440.5 L739.0 440.5 L739.5 440.5 L740.0 440.5 L740.5 440.5 L741.0 440.5 L741.5 440.5 L742.0 440.5 L742.5 440.5 L743.0 440.5 L743.5 440.5 L744.0 440.5 L744.5 440.5 L745.0 440.5 L745.5 440.5 L746.0 440.5 L746.5 440.5 L747.0 440.5 L747.5 440.5 L748.0 440.5 L748.5 440.5 L749.0 440.5 L749.5 440.5 L750.0 440.5 L750.5 440.5 L751.0 440.5 L751.5 440.5 L752.0 440.5 L752.5 440.5 L753.0 440.5 L753.5 440.5 L754.0 440.5 L754.5 440.5 L755.0 440.5 L755.5 440.5 L756.0 440.5 L756.5 440.5 L757.0 440.5 L757.5 440.5 L758.0 440.5 L758.5 440.5 L759.0 440.5 L759.5 440.5 L760.0 440.5 L760.5 440.5 L761.0 440.5 L761.5 440.5 L762.0 440.5 L762.5 440.5 L763.0 440.5 L763.5 440.5 L764.0 440.5 L764.5 440.5 L765.0 440.5 L765.5 440.5 L766.0 440.5 L766.5 440.5 L767.0 440.5 L767.5 440.5 L768.0 440.5 L768.5 440.5 L769.0 440.5 L769.5 440.5 L770.0 440.5 L770.5 440.5 L771.0 440.5 L771.5 440.5 L772.0 440.5 L772.5 440.5 L773.0 440.5 L773.5 440.5 L774.0 440.5 L774.5 440.5 L775.0 440.5 L775.5 440.5 L776.0 440.5 L776.5 440.5 L777.0 440.5 L777.5 440.5 L778.0 440.5 L778.5 440.5 L779.0 440.5 L779.5 440.5 L780.0 440.5 L780.5 440.5 L781.0 440.5 L781.5 440.5 L782.0 440.5 L782.5 440.5 L783.0 440.5 L783.5 440.5 L784.0 440.5 L784.5 440.5 L785.0 440.5 L785.5 440.5 L786.0 440.5 L786.5 440.5 L787.0 440.5 L787.5 440.5 L788.0 440.5 L788.5 440.5 L789.0 440.5 L789.5 440.5 L790.0 440.5 L790.5 440.5 L791.0 440.5 L791.5 440.5 L792.0 440.5 L792.5 440.5 L793.0 440.5 L793.0 441.5 L792.5 441.5 L792.0 441.5 L791.5 441.5 L791.0 441.5 L790.5 441.5 L790.0 441.5 L789.5 441.5 L789.0 441.5 L788.5 441.5 L788.0 441.5 L787.5 441.5 L787.0 441.5 L786.5 441.5 L786.0 441.5 L785.5 441.5 L785.0 441.5 L784.5 441.5 L784.0 441.5 L783.5 441.5 L783.0 441.5 L782.5 441.5 L782.0 441.5 L781.5 441.5 L781.0 441.5 L780.5 441.5 L780.0 441.5 L779.5 441.5 L779.0 441.5 L778.5 441.5 L778.0 441.5 L777.5 441.5 L777.0 441.5 L776.5 441.5 L776.0 441.5 L775.5 441.5 L775.0 441.5 L774.5 441.5 L774.0 441.5 L773.5 441.5 L773.0 441.5 L772.5 441.5 L772.0 441.5 L771.5 441.5 L771.0 441.5 L770.5 441.5 L770.0 441.5 L769.5 441.5 L769.0 441.5 L768.5 441.5 L768.0 441.5 L767.5 441.5 L767.0 441.5 L766.5 441.5 L766.0 441.5 L765.5 441.5 L765.0 441.5 L764.5 441.5 L764.0 441.5 L763.5 441.5 L763.0 441.5 L762.5 441.5 L762.0 441.5 L761.5 441.5 L761.0 441.5 L760.5 441.5 L760.0 441.5 L759.5 441.5 L759.0 441.5 L758.5 441.5 L758.0 441.5 L757.5 441.5 L757.0 441.5 L756.5 441.5 L756.0 441.5 L755.5 441.5 L755.0 441.5 L754.5 441.5 L754.0 441.5 L753.5 441.5 L753.0 441.5 L752.5 441.5 L752.0 441.5 L751.5 441.5 L751.0 441.5 L750.5 441.5 L750.0 441.5 L749.5 441.5 L749.0 441.5 L748.5 441.5 L748.0 441.5 L747.5 441.5 L747.0 441.5 L746.5 441.5 L746.0 441.5 L745.5 441.5 L745.0 441.5 L744.5 441.5 L744.0 441.5 L743.5 441.5 L743.0 441.5 L742.5 441.5 L742.0 441.5 L741.5 441.5 L741.0 441.5 L740.5 441.5 L740.0 441.5 L739.5 441.5 L739.0 441.5 L738.5 441.5 L738.0 441.5 L737.5 441.5 L737.0 441.5 L736.5 441.5 L736.0 441.5 L735.5 441.5 L735.0 441.5 L734.5 441.5 L734.0 441.5 L733.5 441.5 L733.0 441.5 L732.5 441.5 L732.0 441.5 L731.5 441.5 L731.0 441.5 L730.5 441.5 L730.0 441.5 L729.5 441.5 L729.0 441.5 L728.5 441.5 L728.0 441.5 L727.5 441.5 L727.0 441.5 L726.5 441.5 L726.0 441.5 L725.5 441.5 L725.0 441.5 L724.5 441.5 L724.0 441.5 L723.5 441.5 L723.0 441.5 L722.5 441.5 L722.0 441.5 L721.5 441.5 L721.0 441.5 L720.5 441.5 L720.0 441.5 L719.5 441.5 L719.0 441.5 L718.5 441.5 L718.0 441.5 L717.5 441.5 L717.0 441.5 L716.5 441.5 L716.0 441.5 L715.5 441.5 L715.0 441.5 L714.5 441.5 L714.0 441.5 L713.5 441.5 L713.0 441.5 L712.5 441.5 L712.0 441.5 L711.5 441.5 L711.0 441.5 L710.5 441.5 L710.0 441.5 L709.5 441.5 L709.0 441.5 L708.5 441.5 L708.0 441.5 L707.5 441.5 L707.0 441.5 L706.5 441.5 L706.0 441.5 L705.5 441.5 L705.0 441.5 L704.5 441.5 L704.0 441.5 L703.5 441.5 L703.0 441.5 L702.5 441.5 L702.0 441.5 L701.5 441.5 L701.0 441.5 L700.5 441.5 L700.0 441.5 L699.5 441.5 L699.0 441.5 L698.5 441.5 L698.0 441.5 L697.5 441.5 L697.0 441.5 L696.5 441.5 L696.0 441.5 L695.5 441.5 L695.0 441.5 L694.5 441.5 L694.0 441.5 L693.5 441.5 L693.0 441.5 L692.5 441.5 L692.0 441.5 L691.5 441.5 L691.0 441.5 L690.5 441.5 L690.0 441.5 L689.5 441.5 L689.0 441.5 L688.5 441.5 L688.0 441.5 L687.5 441.5 L687.0 441.5 L686.5 441.5 L686.0 441.5 L685.5 441.5 L685.0 441.5 L684.5 441.5 L684.0 441.5 L683.5 441.5 L683.0 441.5 L682.5 441.5 L682.0 441.5 L681.5 441.5 L681.0 441.5 L680.5 441.5 L680.0 441.5 L679.5 441.5 L679.0 441.5 L678.5 441.5 L678.0 441.5 L677.5 441.5 L677.0 441.5 L676.5 441.5 L676.0 441.5 L675.5 441.5 L675.0 441.5 L674.5 441.5 L674.0 441.5 L673.5 441.5 L673.0 441.5 L672.5 441.5 L672.0 441.5 L671.5 441.5 L671.0 441.5 L670.5 441.5 L670.0 441.5 L669.5 441.5 L669.0 441.5 L668.5 441.5 L668.0 441.5 L667.5 441.5 L667.0 441.5 L666.5 441.5 L666.0 441.5 L665.5 441.5 L665.0 441.5 L664.5 441.5 L664.0 441.5 L663.5 441.5 L663.0 441.5 L662.5 441.5 L662.0 441.5 L661.5 441.5 L661.0 441.5 L660.5 441.5 L660.0 441.5 L659.5 441.5 L659.0 441.5 L658.5 441.5 L658.0 441.5 L657.5 441.5 L657.0 441.5 L656.5 441.5 L656.0 441.5 L655.5 441.5 L655.0 441.5 L654.5 441.5 L654.0 441.5 L653.5 441.5 L653.0 441.5 L652.5 441.5 L652.0 441.5 L651.5 441.5 L651.0 441.5 L650.5 441.5 L650.0 441.5 L649.5 441.5 L649.0 441.5 L648.5 441.5 L648.0 441.5 L647.5 441.5 L647.0 441.5 L646.5 441.5 L646.0 441.5 L645.5 441.5 L645.0 441.5 L644.5 441.5 L644.0 441.5 L643.5 441.5 L643.0 441.5 L642.5 441.5 L642.0 441.5 L641.5 441.5 L641.0 441.5 L640.5 441.5 L640.0 441.5 L639.5 441.5 L639.0 441.5 L638.5 441.5 L638.0 441.5 L637.5 441.5 L637.0 441.5 L636.5 441.5 L636.0 441.5 L635.5 441.5 L635.0 441.5 L634.5 441.5 L634.0 441.5 L633.5 441.5 L633.0 441.5 L632.5 441.5 L632.0 441.5 L631.5 441.5 L631.0 441.5 L630.5 441.5 L630.0 441.5 L629.5 441.5 L629.0 441.5 L628.5 441.5 L628.0 441.5 L627.5 441.5 L627.0 441.7 L626.5 441.5 L626.0 441.5 L625.5 441.5 L625.0 441.5 L624.5 441.5 L624.0 441.5 L623.5 441.5 L623.0 441.5 L622.5 441.5 L622.0 441.5 L621.5 441.5 L621.0 441.5 L620.5 441.5 L620.0 441.5 L619.5 441.5 L619.0 441.5 L618.5 441.5 L618.0 441.5 L617.5 441.5 L617.0 441.5 L616.5 441.5 L616.0 441.5 L615.5 441.7 L615.0 441.5 L614.5 441.6 L614.0 441.5 L613.5 441.6 L613.0 441.5 L612.5 441.5 L612.0 441.7 L611.5 441.6 L611.0 441.6 L610.5 441.5 L610.0 441.9 L609.5 441.6 L609.0 441.6 L608.5 441.8 L608.0 441.7 L607.5 441.6 L607.0 441.7 L606.5 441.6 L606.0 441.6 L605.5 441.5 L605.0 441.5 L604.5 441.5 L604.0 441.6 L603.5 441.5 L603.0 441.7 L602.5 441.6 L602.0 441.8 L601.5 441.5 L601.0 441.7 L600.5 441.6 L600.0 441.7 L599.5 441.7 L599.0 441.5 L598.5 441.8 L598.0 441.6 L597.5 441.8 L597.0 441.7 L596.5 441.7 L596.0 441.6 L595.5 441.7 L595.0 441.8 L594.5 441.8 L594.0 441.5 L593.5 441.7 L593.0 441.6 L592.5 442.0 L592.0 441.8 L591.5 441.8 L591.0 441.8 L590.5 441.6 L590.0 441.7 L589.5 441.5 L589.0 441.6 L588.5 441.8 L588.0 441.7 L587.5 441.7 L587.0 441.7 L586.5 441.7 L586.0 441.8 L585.5 441.6 L585.0 442.0 L584.5 441.6 L584.0 441.9 L583.5 441.8 L583.0 441.7 L582.5 441.9 L582.0 442.3 L581.5 441.7 L581.0 441.9 L580.5 441.6 L580.0 442.0 L579.5 441.8 L579.0 441.7 L578.5 442.1 L578.0 441.9 L577.5 442.1 L577.0 442.2 L576.5 441.9 L576.0 441.8 L575.5 442.0 L575.0 441.8 L574.5 441.9 L574.0 442.2 L573.5 441.7 L573.0 441.8 L572.5 441.9 L572.0 441.8 L571.5 442.1 L571.0 442.0 L570.5 441.9 L570.0 441.8 L569.5 442.2 L569.0 442.3 L568.5 441.9 L568.0 442.0 L567.5 441.9 L567.0 442.0 L566.5 442.3 L566.0 442.3 L565.5 442.3 L565.0 442.3 L564.5 442.0 L564.0 442.3 L563.5 442.4 L563.0 442.5 L562.5 442.4 L562.0 442.1 L561.5 442.3 L561.0 442.4 L560.5 442.6 L560.0 442.6 L559.5 442.5 L559.0 442.2 L558.5 442.0 L558.0 442.7 L557.5 442.3 L557.0 442.3 L556.5 442.3 L556.0 442.5 L555.5 442.6 L555.0 442.8 L554.5 442.6 L554.0 442.1 L553.5 442.8 L553.0 442.4 L552.5 442.5 L552.0 442.4 L551.5 443.0 L551.0 442.3 L550.5 442.7 L550.0 442.4 L549.5 442.5 L549.0 442.9 L548.5 442.8 L548.0 442.5 L547.5 442.4 L547.0 443.4 L546.5 442.9 L546.0 442.6 L545.5 444.0 L545.0 443.3 L544.5 442.8 L544.0 443.2 L543.5 442.8 L543.0 443.1 L542.5 443.3 L542.0 443.7 L541.5 442.5 L541.0 443.1 L540.5 443.1 L540.0 442.7 L539.5 443.1 L539.0 443.7 L538.5 442.7 L538.0 442.9 L537.5 444.5 L537.0 444.2 L536.5 443.3 L536.0 443.3 L535.5 443.6 L535.0 444.0 L534.5 442.9 L534.0 442.7 L533.5 443.9 L533.0 445.2 L532.5 443.8 L532.0 443.1 L531.5 443.0 L531.0 443.9 L530.5 443.6 L530.0 444.2 L529.5 443.0 L529.0 444.4 L528.5 443.5 L528.0 443.5 L527.5 444.2 L527.0 444.4 L526.5 444.0 L526.0 444.5 L525.5 443.9 L525.0 444.7 L524.5 443.3 L524.0 444.5 L523.5 443.7 L523.0 444.4 L522.5 444.0 L522.0 445.0 L521.5 444.7 L521.0 445.0 L520.5 443.5 L520.0 445.1 L519.5 443.8 L519.0 444.4 L518.5 443.5 L518.0 443.8 L517.5 443.8 L517.0 444.8 L516.5 444.4 L516.0 445.3 L515.5 445.7 L515.0 445.8 L514.5 444.4 L514.0 447.7 L513.5 445.4 L513.0 446.0 L512.5 445.7 L512.0 445.8 L511.5 446.1 L511.0 446.6 L510.5 445.2 L510.0 446.0 L509.5 444.7 L509.0 444.7 L508.5 446.2 L508.0 447.0 L507.5 446.9 L507.0 444.8 L506.5 446.4 L506.0 446.2 L505.5 447.4 L505.0 447.0 L504.5 445.5 L504.0 447.6 L503.5 445.3 L503.0 446.9 L502.5 445.0 L502.0 446.3 L501.5 447.2 L501.0 447.5 L500.5 448.4 L500.0 447.8 L499.5 448.7 L499.0 447.1 L498.5 448.4 L498.0 445.6 L497.5 448.0 L497.0 446.0 L496.5 447.1 L496.0 446.3 L495.5 447.3 L495.0 448.4 L494.5 449.7 L494.0 448.6 L493.5 449.4 L493.0 446.5 L492.5 448.6 L492.0 453.6 L491.5 447.1 L491.0 450.1 L490.5 447.5 L490.0 454.1 L489.5 449.7 L489.0 449.2 L488.5 448.8 L488.0 451.2 L487.5 449.0 L487.0 449.7 L486.5 453.2 L486.0 449.1 L485.5 450.4 L485.0 448.2 L484.5 450.1 L484.0 451.0 L483.5 451.7 L483.0 448.3 L482.5 448.6 L482.0 452.3 L481.5 452.2 L481.0 454.1 L480.5 449.1 L480.0 452.8 L479.5 452.4 L479.0 459.3 L478.5 450.7 L478.0 455.1 L477.5 452.1 L477.0 452.2 L476.5 456.5 L476.0 450.7 L475.5 450.2 L475.0 450.7 L474.5 451.4 L474.0 463.3 L473.5 451.8 L473.0 457.9 L472.5 453.0 L472.0 458.5 L471.5 454.7 L471.0 456.2 L470.5 452.1 L470.0 457.8 L469.5 453.4 L469.0 454.8 L468.5 457.5 L468.0 459.5 L467.5 455.7 L467.0 457.1 L466.5 459.7 L466.0 452.5 L465.5 450.6 L465.0 453.0 L464.5 452.5 L464.0 447.4 L463.5 446.7 L463.0 446.0 L462.5 444.0Z" fill="#44bde0"/><rect x="465.5" y="371.7" width="0.6" height="13.3" fill="#3a90d8"/><rect x="467.0" y="367.4" width="0.6" height="17.5" fill="#3a90d8"/><rect x="467.5" y="364.2" width="0.6" height="26.2" fill="#3a90d8"/><rect x="468.5" y="366.2" width="0.6" height="29.1" fill="#3a90d8"/><rect x="470.5" y="361.2" width="0.6" height="18.9" fill="#3a90d8"/><rect x="471.5" y="374.6" width="0.6" height="18.4" fill="#3a90d8"/><rect x="472.5" y="369.0" width="0.6" height="21.6" fill="#3a90d8"/><rect x="480.5" y="372.1" width="0.6" height="13.7" fill="#3a90d8"/><rect x="483.5" y="375.0" width="0.6" height="8.9" fill="#3a90d8"/><rect x="486.0" y="373.5" width="0.6" height="14.0" fill="#3a90d8"/><rect x="487.5" y="374.1" width="0.6" height="11.3" fill="#3a90d8"/><rect x="489.0" y="375.6" width="0.6" height="7.8" fill="#3a90d8"/><rect x="489.5" y="376.0" width="0.6" height="8.7" fill="#3a90d8"/><rect x="490.5" y="370.4" width="0.6" height="12.4" fill="#3a90d8"/><rect x="491.5" y="369.7" width="0.6" height="12.8" fill="#3a90d8"/><rect x="492.0" y="371.8" width="0.6" height="11.5" fill="#3a90d8"/><rect x="492.5" y="375.2" width="0.6" height="10.6" fill="#3a90d8"/><rect x="498.0" y="374.2" width="0.6" height="11.5" fill="#3a90d8"/><rect x="501.0" y="373.2" width="0.6" height="7.2" fill="#3a90d8"/><rect x="506.0" y="376.2" width="0.6" height="5.5" fill="#3a90d8"/><rect x="508.0" y="376.0" width="0.6" height="6.1" fill="#3a90d8"/><rect x="509.0" y="375.2" width="0.6" height="8.4" fill="#3a90d8"/><rect x="511.0" y="376.5" width="0.6" height="4.6" fill="#3a90d8"/><rect x="515.0" y="374.8" width="0.6" height="7.3" fill="#3a90d8"/><rect x="515.5" y="377.1" width="0.6" height="4.1" fill="#3a90d8"/><rect x="519.0" y="377.1" width="0.6" height="3.8" fill="#3a90d8"/><rect x="520.0" y="377.9" width="0.6" height="3.7" fill="#3a90d8"/><rect x="521.5" y="376.4" width="0.6" height="4.0" fill="#3a90d8"/><rect x="524.5" y="378.0" width="0.6" height="2.2" fill="#3a90d8"/><rect x="525.0" y="377.1" width="0.6" height="3.9" fill="#3a90d8"/><rect x="526.5" y="377.5" width="0.6" height="4.0" fill="#3a90d8"/><rect x="529.0" y="377.1" width="0.6" height="3.7" fill="#3a90d8"/><rect x="464.0" y="438.3" width="0.6" height="6.1" fill="#3a90d8"/><rect x="468.0" y="424.7" width="0.6" height="28.0" fill="#3a90d8"/><rect x="468.5" y="418.9" width="0.6" height="35.8" fill="#3a90d8"/><rect x="469.0" y="417.5" width="0.6" height="33.8" fill="#3a90d8"/><rect x="469.5" y="420.2" width="0.6" height="29.0" fill="#3a90d8"/><rect x="471.5" y="433.9" width="0.6" height="14.3" fill="#3a90d8"/><rect x="473.0" y="431.6" width="0.6" height="24.8" fill="#3a90d8"/><rect x="474.0" y="436.1" width="0.6" height="21.8" fill="#3a90d8"/><rect x="474.5" y="436.4" width="0.6" height="11.5" fill="#3a90d8"/><rect x="475.5" y="431.1" width="0.6" height="16.8" fill="#3a90d8"/><rect x="476.0" y="430.5" width="0.6" height="14.7" fill="#3a90d8"/><rect x="479.5" y="431.7" width="0.6" height="18.2" fill="#3a90d8"/><rect x="483.5" y="431.4" width="0.6" height="15.1" fill="#3a90d8"/><rect x="486.0" y="434.0" width="0.6" height="13.8" fill="#3a90d8"/><rect x="489.5" y="433.6" width="0.6" height="13.5" fill="#3a90d8"/><rect x="490.0" y="431.8" width="0.6" height="19.5" fill="#3a90d8"/><rect x="490.5" y="434.2" width="0.6" height="10.1" fill="#3a90d8"/><rect x="492.0" y="437.5" width="0.6" height="13.1" fill="#3a90d8"/><rect x="495.5" y="435.1" width="0.6" height="11.3" fill="#3a90d8"/><rect x="496.5" y="435.4" width="0.6" height="10.5" fill="#3a90d8"/><rect x="497.5" y="438.8" width="0.6" height="7.0" fill="#3a90d8"/><rect x="499.5" y="438.4" width="0.6" height="7.0" fill="#3a90d8"/><rect x="502.0" y="438.3" width="0.6" height="6.2" fill="#3a90d8"/><rect x="507.5" y="439.2" width="0.6" height="5.9" fill="#3a90d8"/><rect x="513.5" y="438.8" width="0.6" height="6.0" fill="#3a90d8"/><rect x="523.0" y="439.2" width="0.6" height="4.5" fill="#3a90d8"/><rect x="527.0" y="440.1" width="0.6" height="3.4" fill="#3a90d8"/><rect x="530.0" y="439.3" width="0.6" height="4.0" fill="#3a90d8"/><rect x="533.5" y="440.4" width="0.6" height="2.4" fill="#3a90d8"/><rect x="537.0" y="439.8" width="0.6" height="3.6" fill="#3a90d8"/><rect x="460.90" y="340" width="1.20" height="131.5" fill="rgba(0,0,0,0.1)"/><rect x="466.11" y="340" width="1.20" height="131.5" fill="rgba(0,0,0,0.1)"/><rect x="471.32" y="340" width="1.20" height="131.5" fill="rgba(0,0,0,0.1)"/><rect x="476.54" y="340" width="1.20" height="131.5" fill="rgba(0,0,0,0.1)"/><rect x="481.75" y="340" width="1.20" height="131.5" fill="rgba(0,0,0,0.1)"/><rect x="486.96" y="340" width="1.20" height="131.5" fill="rgba(0,0,0,0.1)"/><rect x="492.17" y="340" width="1.20" height="131.5" fill="rgba(0,0,0,0.1)"/><rect x="497.39" y="340" width="1.20" height="131.5" fill="rgba(0,0,0,0.1)"/><rect x="502.60" y="340" width="1.20" height="131.5" fill="rgba(0,0,0,0.1)"/><rect x="507.81" y="340" width="1.20" height="131.5" fill="rgba(0,0,0,0.1)"/><rect x="513.02" y="340" width="1.20" height="131.5" fill="rgba(0,0,0,0.1)"/><rect x="518.24" y="340" width="1.20" height="131.5" fill="rgba(0,0,0,0.1)"/><rect x="523.45" y="340" width="1.20" height="131.5" fill="rgba(0,0,0,0.1)"/><rect x="528.66" y="340" width="1.20" height="131.5" fill="rgba(0,0,0,0.1)"/><rect x="533.88" y="340" width="1.20" height="131.5" fill="rgba(0,0,0,0.1)"/><rect x="539.09" y="340" width="1.20" height="131.5" fill="rgba(0,0,0,0.1)"/><rect x="544.30" y="340" width="1.20" height="131.5" fill="rgba(0,0,0,0.1)"/><rect x="549.51" y="340" width="1.20" height="131.5" fill="rgba(0,0,0,0.1)"/><rect x="554.73" y="340" width="1.20" height="131.5" fill="rgba(0,0,0,0.1)"/><rect x="559.94" y="340" width="1.20" height="131.5" fill="rgba(0,0,0,0.1)"/><rect x="565.15" y="340" width="1.20" height="131.5" fill="rgba(0,0,0,0.1)"/><rect x="570.36" y="340" width="1.20" height="131.5" fill="rgba(0,0,0,0.1)"/><rect x="575.57" y="340" width="1.20" height="131.5" fill="rgba(0,0,0,0.1)"/><rect x="580.79" y="340" width="1.20" height="131.5" fill="rgba(0,0,0,0.1)"/><rect x="586.00" y="340" width="1.20" height="131.5" fill="rgba(0,0,0,0.1)"/><rect x="591.21" y="340" width="1.20" height="131.5" fill="rgba(0,0,0,0.1)"/><rect x="596.43" y="340" width="1.20" height="131.5" fill="rgba(0,0,0,0.1)"/><rect x="601.64" y="340" width="1.20" height="131.5" fill="rgba(0,0,0,0.1)"/><rect x="606.85" y="340" width="1.20" height="131.5" fill="rgba(0,0,0,0.1)"/><rect x="612.06" y="340" width="1.20" height="131.5" fill="rgba(0,0,0,0.1)"/><rect x="617.27" y="340" width="1.20" height="131.5" fill="rgba(0,0,0,0.1)"/><rect x="622.49" y="340" width="1.20" height="131.5" fill="rgba(0,0,0,0.1)"/><rect x="627.70" y="340" width="1.20" height="131.5" fill="rgba(0,0,0,0.1)"/><rect x="632.91" y="340" width="1.20" height="131.5" fill="rgba(0,0,0,0.1)"/><rect x="638.12" y="340" width="1.20" height="131.5" fill="rgba(0,0,0,0.1)"/><rect x="643.34" y="340" width="1.20" height="131.5" fill="rgba(0,0,0,0.1)"/><rect x="648.55" y="340" width="1.20" height="131.5" fill="rgba(0,0,0,0.1)"/><rect x="653.76" y="340" width="1.20" height="131.5" fill="rgba(0,0,0,0.1)"/><rect x="658.98" y="340" width="1.20" height="131.5" fill="rgba(0,0,0,0.1)"/><rect x="664.19" y="340" width="1.20" height="131.5" fill="rgba(0,0,0,0.1)"/><rect x="669.40" y="340" width="1.20" height="131.5" fill="rgba(0,0,0,0.1)"/><rect x="674.61" y="340" width="1.20" height="131.5" fill="rgba(0,0,0,0.1)"/><rect x="679.82" y="340" width="1.20" height="131.5" fill="rgba(0,0,0,0.1)"/><rect x="685.04" y="340" width="1.20" height="131.5" fill="rgba(0,0,0,0.1)"/><rect x="690.25" y="340" width="1.20" height="131.5" fill="rgba(0,0,0,0.1)"/><rect x="695.46" y="340" width="1.20" height="131.5" fill="rgba(0,0,0,0.1)"/><rect x="700.68" y="340" width="1.20" height="131.5" fill="rgba(0,0,0,0.1)"/><rect x="705.89" y="340" width="1.20" height="131.5" fill="rgba(0,0,0,0.1)"/><rect x="711.10" y="340" width="1.20" height="131.5" fill="rgba(0,0,0,0.1)"/><rect x="716.31" y="340" width="1.20" height="131.5" fill="rgba(0,0,0,0.1)"/><rect x="721.52" y="340" width="1.20" height="131.5" fill="rgba(0,0,0,0.1)"/><rect x="726.74" y="340" width="1.20" height="131.5" fill="rgba(0,0,0,0.1)"/><rect x="731.95" y="340" width="1.20" height="131.5" fill="rgba(0,0,0,0.1)"/><rect x="737.16" y="340" width="1.20" height="131.5" fill="rgba(0,0,0,0.1)"/><rect x="742.38" y="340" width="1.20" height="131.5" fill="rgba(0,0,0,0.1)"/><rect x="747.59" y="340" width="1.20" height="131.5" fill="rgba(0,0,0,0.1)"/><rect x="752.80" y="340" width="1.20" height="131.5" fill="rgba(0,0,0,0.1)"/><rect x="758.01" y="340" width="1.20" height="131.5" fill="rgba(0,0,0,0.1)"/><rect x="763.23" y="340" width="1.20" height="131.5" fill="rgba(0,0,0,0.1)"/><rect x="768.44" y="340" width="1.20" height="131.5" fill="rgba(0,0,0,0.1)"/><rect x="773.65" y="340" width="1.20" height="131.5" fill="rgba(0,0,0,0.1)"/><rect x="778.86" y="340" width="1.20" height="131.5" fill="rgba(0,0,0,0.1)"/><rect x="784.07" y="340" width="1.20" height="131.5" fill="rgba(0,0,0,0.1)"/><rect x="789.29" y="340" width="1.20" height="131.5" fill="rgba(0,0,0,0.1)"/><rect x="628.2" y="348" width="1" height="123" fill="#5a4c18" opacity=".45"/><rect x="535.0" y="378.3" width="3.9" height="1.4" fill="#c040c0"/><rect x="539.0" y="378.3" width="2.8" height="1.4" fill="#3a70d8"/><rect x="542.0" y="378.3" width="2.0" height="1.4" fill="#5060e0"/><rect x="545.1" y="378.3" width="1.7" height="1.4" fill="#7a40d0"/><rect x="548.9" y="378.3" width="3.9" height="1.4" fill="#3a50d8"/><rect x="554.2" y="378.3" width="2.9" height="1.4" fill="#3a50d8"/><rect x="559.6" y="378.3" width="2.9" height="1.4" fill="#3a50d8"/><rect x="563.5" y="378.3" width="1.8" height="1.4" fill="#5060e0"/><rect x="567.3" y="378.3" width="1.8" height="1.4" fill="#7a40d0"/><rect x="569.6" y="378.3" width="2.9" height="1.4" fill="#3a50d8"/><rect x="572.6" y="378.3" width="2.7" height="1.4" fill="#7a40d0"/><rect x="577.3" y="378.3" width="3.0" height="1.4" fill="#30a0e0"/><rect x="581.0" y="378.4" width="1.9" height="1.1" fill="#3a70d8"/><rect x="583.1" y="378.4" width="2.8" height="1.1" fill="#c040c0"/><rect x="587.8" y="378.4" width="3.0" height="1.1" fill="#c040c0"/><rect x="592.1" y="378.4" width="3.4" height="1.1" fill="#7a40d0"/><rect x="596.7" y="378.4" width="3.9" height="1.1" fill="#3a50d8"/><rect x="602.0" y="378.4" width="3.7" height="1.1" fill="#3a70d8"/><rect x="607.4" y="378.4" width="2.7" height="1.1" fill="#5060e0"/><rect x="610.3" y="378.4" width="3.9" height="1.1" fill="#3a50d8"/><rect x="615.8" y="378.4" width="3.3" height="1.1" fill="#3a50d8"/><rect x="620.6" y="378.4" width="3.6" height="1.1" fill="#40c0e0"/><rect x="628.4" y="378.4" width="1.8" height="1.1" fill="#5060e0"/><rect x="632.1" y="378.4" width="3.3" height="1.1" fill="#7a40d0"/><rect x="637.7" y="378.4" width="1.7" height="1.1" fill="#30a0e0"/><rect x="653.6" y="378.6" width="1.9" height="0.9" fill="#7a40d0"/><rect x="664.8" y="378.6" width="2.3" height="0.9" fill="#5060e0"/><rect x="696.9" y="378.6" width="1.7" height="0.9" fill="#30a0e0"/><rect x="535.0" y="440.3" width="1.8" height="1.4" fill="#7a40d0"/><rect x="537.0" y="440.3" width="1.9" height="1.4" fill="#5060e0"/><rect x="539.8" y="440.3" width="1.7" height="1.4" fill="#3a50d8"/><rect x="542.4" y="440.3" width="2.1" height="1.4" fill="#40c0e0"/><rect x="545.5" y="440.3" width="1.8" height="1.4" fill="#3a50d8"/><rect x="549.7" y="440.3" width="2.7" height="1.4" fill="#30a0e0"/><rect x="552.7" y="440.3" width="3.4" height="1.4" fill="#c040c0"/><rect x="565.8" y="440.3" width="3.9" height="1.4" fill="#c040c0"/><rect x="575.1" y="440.3" width="2.8" height="1.4" fill="#7a40d0"/><rect x="578.8" y="440.3" width="3.0" height="1.4" fill="#7a40d0"/><rect x="583.7" y="440.4" width="3.5" height="1.1" fill="#7a40d0"/><rect x="589.1" y="440.4" width="2.0" height="1.1" fill="#7a40d0"/><rect x="592.9" y="440.4" width="3.5" height="1.1" fill="#3a50d8"/><rect x="596.9" y="440.4" width="3.9" height="1.1" fill="#5060e0"/><rect x="603.1" y="440.4" width="3.9" height="1.1" fill="#c040c0"/><rect x="607.5" y="440.4" width="2.7" height="1.1" fill="#7a40d0"/><rect x="611.4" y="440.4" width="3.6" height="1.1" fill="#5060e0"/><rect x="616.6" y="440.4" width="3.1" height="1.1" fill="#3a70d8"/><rect x="620.1" y="440.4" width="3.5" height="1.1" fill="#30a0e0"/><rect x="624.7" y="440.4" width="2.6" height="1.1" fill="#7a40d0"/><rect x="627.5" y="440.4" width="2.5" height="1.1" fill="#40c0e0"/><rect x="634.3" y="440.4" width="3.8" height="1.1" fill="#5060e0"/><rect x="638.5" y="440.4" width="3.0" height="1.1" fill="#3a70d8"/><rect x="643.8" y="440.6" width="2.9" height="0.9" fill="#7a40d0"/><rect x="657.4" y="440.6" width="4.0" height="0.9" fill="#30a0e0"/><rect x="699.0" y="440.6" width="1.8" height="0.9" fill="#5060e0"/><rect x="462" y="410.2" width="331" height="1.6" fill="#a86018"/><rect x="460" y="340" width="2" height="131.5" fill="#2a2a2a"/><circle cx="467" cy="344" r="3.2" fill="none" stroke="#777" stroke-width=".9"/><path d="M467 340.5 V343.5" stroke="#777" stroke-width=".9"/><rect x="473" y="340.8" width="8.2" height="6.5" fill="#666666"/><rect x="483" y="340.8" width="8.2" height="6.5" fill="#666666"/><rect x="493" y="340.8" width="8.2" height="6.5" fill="#666666"/><rect x="503" y="340.8" width="8.2" height="6.5" fill="#48cad6"/><rect x="512.5" y="340.8" width="8.2" height="6.5" fill="#666666"/><rect x="522" y="340.8" width="8.2" height="6.5" fill="#666666"/><polygon points="462,348 467,348 462,353" fill="#f0e8b0"/><polygon points="787,348 792,348 792,353" fill="#f0e8b0"/></svg>
<div class="a" style="left:367.5px;top:198.5px;font-size:7.7px;line-height:9px;color:#d4d4d4">Fuel.rpp</div>
<div class="a" style="left:299px;top:268px;width:498px;height:8px;overflow:hidden;font-size:6.4px;line-height:7px;font-weight:normal;-webkit-text-stroke:0.15px #e09cc8;color:#e09cc8;letter-spacing:-0.35px"><span style="position:absolute;left:-3.5px;top:0">OFFLINE</span><span style="position:absolute;left:30.7px;top:0">OFFLINE</span><span style="position:absolute;left:64.9px;top:0">OFFLINE</span><span style="position:absolute;left:99.1px;top:0">OFFLINE</span><span style="position:absolute;left:133.3px;top:0">OFFLINE</span><span style="position:absolute;left:167.5px;top:0">OFFLINE</span><span style="position:absolute;left:201.7px;top:0">OFFLINE</span><span style="position:absolute;left:235.9px;top:0">OFFLINE</span><span style="position:absolute;left:270.1px;top:0">OFFLINE</span><span style="position:absolute;left:304.3px;top:0">OFFLINE</span><span style="position:absolute;left:338.5px;top:0">OFFLINE</span><span style="position:absolute;left:372.7px;top:0">OFFLINE</span><span style="position:absolute;left:406.9px;top:0">OFFLINE</span><span style="position:absolute;left:441.1px;top:0">OFFLINE</span><span style="position:absolute;left:475.3px;top:0">OFFLINE</span></div>
<div class="a" style="left:533px;top:339.5px;font-size:6.5px;line-height:9px;color:#c4ccd8;white-space:nowrap">EXPLReal_Fuel-Small 01 Composite_AKBOOM_Explosions</div>
<svg class="a" style="left:0;top:0" width="800" height="474"><defs><filter id="sh" x="-30%" y="-30%" width="160%" height="160%"><feGaussianBlur in="SourceAlpha" stdDeviation="1.3"/><feOffset dx="0.6" dy="1.2"/><feComponentTransfer><feFuncA type="linear" slope="0.55"/></feComponentTransfer><feMerge><feMergeNode/><feMergeNode in="SourceGraphic"/></feMerge></filter></defs><circle cx="429.2" cy="269.4" r="15.9" fill="#1a98d4" filter="url(#sh)"/><path d="M427.7 263 H430.8 V273.9 H433 V276 H424.5 V273.9 H427.7 V266.4 L424.7 267.4 V265.2 Z" fill="#fff"/><circle cx="626.1" cy="409.3" r="15.8" fill="#1a98d4" filter="url(#sh)"/><text x="625.5" y="415.8" font-size="17.6" font-weight="bold" text-anchor="middle" fill="#fff" font-family="Liberation Sans">2</text></svg>
</body></html>
